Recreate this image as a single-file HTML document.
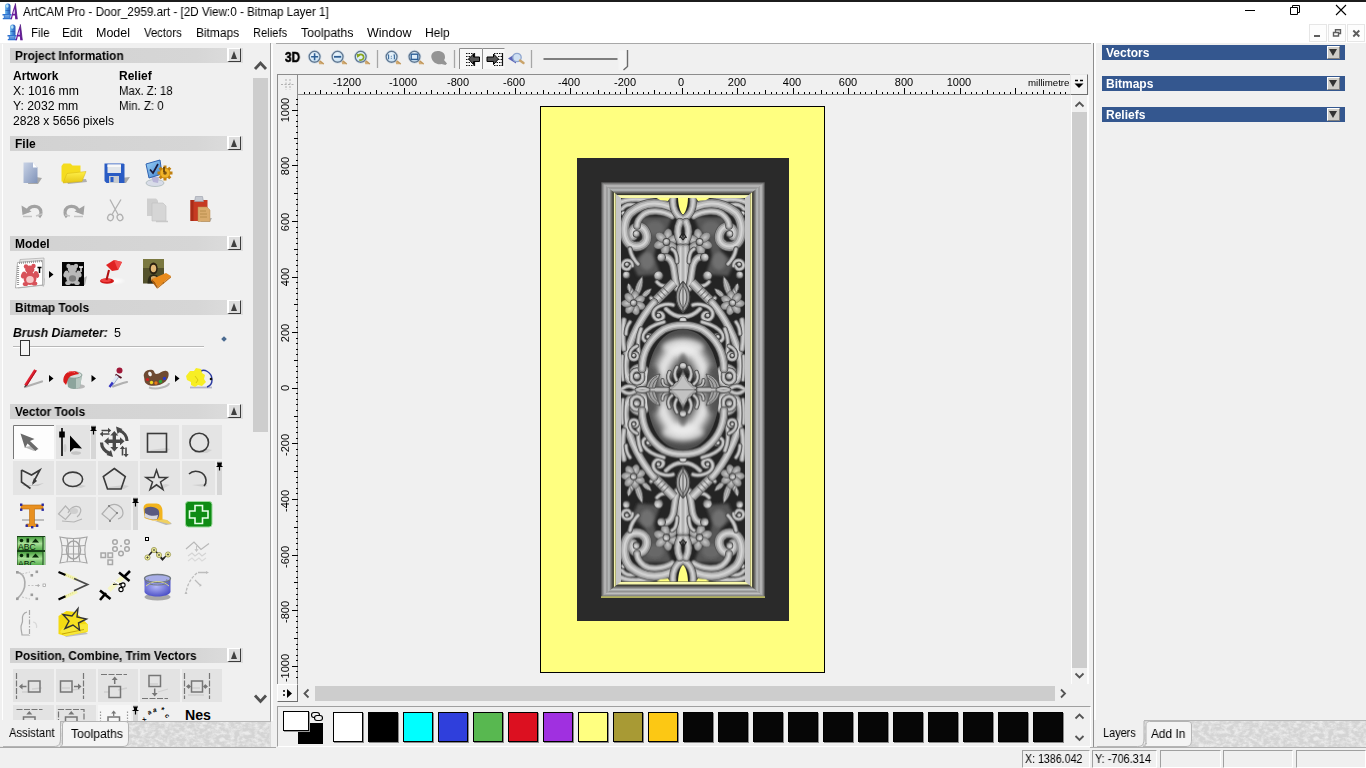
<!DOCTYPE html>
<html><head><meta charset="utf-8"><title>ArtCAM Pro</title>
<style>
*{box-sizing:border-box;margin:0;padding:0}
html,body{width:1366px;height:768px;overflow:hidden;background:#f0f0f0;font-family:"Liberation Sans",sans-serif;font-size:12px;color:#000}
.a{position:absolute}
.t{position:absolute;white-space:nowrap;line-height:1;transform-origin:0 0;will-change:transform}
.hdr{position:absolute;left:10px;width:233px;height:15px;background:linear-gradient(90deg,#d2d2d2 0%,#d6d6d6 80%,#dedede 100%)}
.hdr b{will-change:transform;position:absolute;left:5px;top:2px;font-size:12px;line-height:13px;white-space:nowrap;transform-origin:0 0;transform:scaleX(.987)}
.hbtn{position:absolute;right:2px;top:0;width:14px;height:14px;background:#dedede;border:1px solid;border-color:#fff #3c3c3c #3c3c3c #fff;border-left-width:2px;border-top-width:1px}
.hbtn:after{content:"";position:absolute;left:2px;top:2px;border:3.5px solid transparent;border-top:0;border-bottom:8px solid #404040}
.bh{position:absolute;left:1102px;width:243px;height:15px;background:#34578f}
.bh b{will-change:transform;position:absolute;left:4px;top:2px;font-size:12px;line-height:13px;color:#fff;white-space:nowrap}
.bbtn{position:absolute;left:225px;top:1px;width:13px;height:13px;background:#cfcdc8;border:1px solid;border-color:#fff #808080 #808080 #fff}
.bbtn:after{content:"";position:absolute;left:1px;top:2px;border:4.5px solid transparent;border-bottom:0;border-top:7px solid #333}
.sw{position:absolute;top:712px;width:30px;height:30px;border:1px solid #000;box-shadow:1px 1px 0 #8a8a8a}
.ic{position:absolute;width:40px;height:34px}
.tb{position:absolute;background:#e2e2e2}
</style></head><body>
<!-- top strip -->
<div class="a" style="left:0;top:0;width:1366px;height:2px;background:#1c1c1c"></div>
<div class="a" style="left:0;top:2px;width:1366px;height:41px;background:#fff"></div>
<!-- app icons -->
<svg class="a" style="left:2px;top:3px" width="16" height="17" viewBox="0 0 16 17"><defs><linearGradient id="lgm" x1="0" y1="0" x2="1" y2="0"><stop offset="0" stop-color="#7ec4f0"/><stop offset=".5" stop-color="#3c84d8"/><stop offset="1" stop-color="#2858b0"/></linearGradient><g id="applogo"><rect x="3" y=".5" width="5.500" height="12" rx="2.500" fill="url(#lgm)"/><ellipse cx="5.300" cy="3" rx="1.300" ry="1.800" fill="#c4ecfa" opacity=".9"/><rect x="3.500" y="7" width="4.500" height="1" fill="#2050a8" opacity=".6"/><path d="M.5 11h9v1.500h-1v2.500h1v1.200H.8v-1.200h1v-2.500H.5z" fill="#2f72d0"/><path d="M2.500 12.700h5M2.500 14h5" stroke="#9ccaf0" stroke-width=".7"/><path d="M8.500 16.200C10 11 11.500 5 13.300 0.300 14 5 14.600 11 15.300 16.200H13.200L12.900 12.500H10.800L9.900 16.200Z" fill="#6a1c9c"/><path d="M11.200 10.800h1.600L12.500 5.500Z" fill="#fff"/><path d="M13.300 .3C14 5 14.600 11 15.300 16.200" stroke="#4a1078" stroke-width=".8" fill="none"/></g></defs><use href="#applogo"/></svg>
<svg class="a" style="left:7px;top:24px" width="16" height="17" viewBox="0 0 16 17"><use href="#applogo"/></svg>
<!-- title -->
<div class="t" id="title" style="left:23px;top:6px;font-size:12px;transform:scaleX(.972)">ArtCAM Pro - Door_2959.art - [2D View:0 - Bitmap Layer 1]</div>
<!-- window controls -->
<svg class="a" style="left:1240px;top:2px" width="126" height="20" viewBox="1240 2 126 20">
<path d="M1245 10.500h10" stroke="#000" stroke-width="1" fill="none"/>
<path d="M1290.500 7.500h7v7h-7z M1292.500 7.500v-2h7v7h-2" stroke="#000" stroke-width="1" fill="none"/>
<path d="M1336 5l10 10M1346 5l-10 10" stroke="#000" stroke-width="1.100" fill="none"/>
</svg>
<!-- menu -->
<div class="t m" style="left:31px;top:27px;font-size:12.5px;transform:scaleX(0.92)">File</div>
<div class="t m" style="left:62px;top:27px;font-size:12.5px;transform:scaleX(0.95)">Edit</div>
<div class="t m" style="left:96px;top:27px;font-size:12.5px;transform:scaleX(1)">Model</div>
<div class="t m" style="left:144px;top:27px;font-size:12.5px;transform:scaleX(0.905)">Vectors</div>
<div class="t m" style="left:196px;top:27px;font-size:12.5px;transform:scaleX(0.955)">Bitmaps</div>
<div class="t m" style="left:253px;top:27px;font-size:12.5px;transform:scaleX(0.893)">Reliefs</div>
<div class="t m" style="left:301px;top:27px;font-size:12.5px;transform:scaleX(0.98)">Toolpaths</div>
<div class="t m" style="left:367px;top:27px;font-size:12.5px;transform:scaleX(0.99)">Window</div>
<div class="t m" style="left:425px;top:27px;font-size:12.5px;transform:scaleX(0.96)">Help</div>
<!-- mdi controls -->
<svg class="a" style="left:1308px;top:23px" width="58" height="20" viewBox="1308 23 58 20">
<g fill="#fdfdfd" stroke="#e6e6e6" stroke-width="1"><rect x="1309.500" y="24.500" width="17" height="17"/><rect x="1328.500" y="24.500" width="17" height="17"/><rect x="1347.500" y="24.500" width="17" height="17"/></g>
<path d="M1314 36h6" stroke="#5e5e5e" stroke-width="2"/>
<path d="M1333.500 32.500h5v3.500h-5z M1335.500 32v-2.300h5v3.800h-1.800" stroke="#5e5e5e" stroke-width="1.400" fill="none"/>
<path d="M1353.300 30.500l6 6M1359.300 30.500l-6 6" stroke="#5e5e5e" stroke-width="1.900" fill="none"/>
</svg>
<!-- status bar -->
<div class="a" style="left:1022px;top:750px;width:68px;height:18px;border:1px solid;border-color:#a0a0a0 #fff #fff #a0a0a0"></div>
<div class="a" style="left:1092px;top:750px;width:65px;height:18px;border:1px solid;border-color:#a0a0a0 #fff #fff #a0a0a0"></div>
<div class="a" style="left:1160px;top:750px;width:61px;height:18px;border:1px solid;border-color:#a0a0a0 #fff #fff #a0a0a0"></div>
<div class="a" style="left:1223px;top:750px;width:70px;height:18px;border:1px solid;border-color:#a0a0a0 #fff #fff #a0a0a0"></div>
<div class="a" style="left:1296px;top:750px;width:70px;height:18px;border:1px solid;border-color:#a0a0a0 #fff #fff #a0a0a0"></div>
<div class="t" style="left:1025px;top:753px;font-size:12px;transform:scaleX(.886)">X: 1386.042</div>
<div class="t" style="left:1095px;top:753px;font-size:12px;transform:scaleX(.912)">Y: -706.314</div>
<!-- LEFT PANEL -->
<div class="a" style="left:0;top:43px;width:271px;height:679px;border-right:1px solid #a0a0a0;border-bottom:1px solid #b4b4b4"></div><div class="a" style="left:0;top:747px;width:276px;height:1px;background:#a8a8a8"></div>
<div class="a" style="left:2px;top:44px;width:1px;height:677px;background:#fff"></div>
<!-- scrollbar -->
<div class="a" style="left:252px;top:47px;width:17px;height:674px;background:#f0f0f0"></div>
<div class="a" style="left:253px;top:78px;width:15px;height:354px;background:#cdcdcd"></div>
<svg class="a" style="left:252px;top:57px" width="17" height="16"><path d="M3 12L8.500 6 14 12" stroke="#505050" stroke-width="2.800" fill="none"/></svg>
<svg class="a" style="left:252px;top:692px" width="17" height="16"><path d="M3 3.500L8.500 9.500 14 3.500" stroke="#505050" stroke-width="2.800" fill="none"/></svg>

<div class="hdr" style="top:48px"><b>Project Information</b><i class="hbtn"></i></div>
<div class="t" style="left:13px;top:70px;font-weight:bold;font-size:12px">Artwork</div>
<div class="t" style="left:119px;top:70px;font-weight:bold;font-size:12px">Relief</div>
<div class="t" style="left:13px;top:84.500px;font-size:12px;transform:scaleX(1.02)">X: 1016 mm</div>
<div class="t" style="left:119px;top:84.500px;font-size:12px;transform:scaleX(.947)">Max. Z: 18</div>
<div class="t" style="left:13px;top:99.500px;font-size:12px;transform:scaleX(1.02)">Y: 2032 mm</div>
<div class="t" style="left:119px;top:99.500px;font-size:12px;transform:scaleX(.957)">Min. Z: 0</div>
<div class="t" style="left:13px;top:114.500px;font-size:12px;transform:scaleX(1.01)">2828 x 5656 pixels</div>

<div class="hdr" style="top:136px"><b>File</b><i class="hbtn"></i></div>
<svg class="a" style="left:0;top:152px" width="250" height="84" viewBox="0 152 250 84">
<defs>
<linearGradient id="gpage" x1="0" y1="0" x2="1" y2="1"><stop offset="0" stop-color="#c9d3e6"/><stop offset="1" stop-color="#7f92b8"/></linearGradient>
<linearGradient id="gfold" x1="0" y1="0" x2="0" y2="1"><stop offset="0" stop-color="#fff04a"/><stop offset="1" stop-color="#e6c614"/></linearGradient>
<linearGradient id="gmon" x1="0" y1="0" x2="1" y2="1"><stop offset="0" stop-color="#9fd4f6"/><stop offset="1" stop-color="#3d7fd0"/></linearGradient>
<filter id="b1" x="-30%" y="-30%" width="160%" height="160%"><feGaussianBlur stdDeviation=".6"/></filter>
<filter id="b2" x="-30%" y="-30%" width="160%" height="160%"><feGaussianBlur stdDeviation="1"/></filter>
</defs>
<!-- new -->
<path d="M30 176l12 2-4 6H28z" fill="#a8a8a8" filter="url(#b1)"/>
<path d="M23.500 162.500H33l4.500 5V183H23.500z" fill="url(#gpage)"/>
<path d="M33 162.500v5h4.500z" fill="#fff"/>
<!-- open -->
<path d="M66 180l20-1 1 3-19 2z" fill="#b0b0b0" filter="url(#b1)"/>
<path d="M61.500 166l2-2.500h7l2 2h8v8l-15 9-4-1z" fill="#f5dc1e"/>
<path d="M63 183l4-9.500 19-2-4 10z" fill="url(#gfold)" stroke="#d4b410" stroke-width=".5"/>
<!-- save -->
<path d="M120 178l10-1-4 6h-8z" fill="#a8a8a8" filter="url(#b1)"/>
<path d="M104.500 163.500h19l1 1V183h-18l-2-2z" fill="#2a5cc4"/>
<rect x="107.500" y="164.500" width="13.500" height="8.500" fill="#e2e6ea"/>
<rect x="107.500" y="164.500" width="13.500" height="2.500" fill="#f8f8f8"/>
<rect x="109" y="176" width="10" height="7" fill="#c8ccd0"/>
<rect x="110.500" y="177" width="3" height="5" fill="#2a5cc4"/>
<!-- options -->
<ellipse cx="155" cy="183" rx="9" ry="3.500" fill="#d8dce8" stroke="#9aa" stroke-width=".6"/>
<path d="M151 176l8 1-1 6-5-1z" fill="#b8b4d8"/>
<path d="M146 164l14-4 2 14-13 4z" fill="url(#gmon)" stroke="#2f62b0" stroke-width="1"/>
<path d="M150 169.500l3 3.500 5-9" stroke="#1a1a3a" stroke-width="1.700" fill="none"/>
<g transform="translate(165,173)"><circle r="5.500" fill="#e0a21c"/><g stroke="#c08010" stroke-width="3"><path d="M0-7.500v15M-7.500 0h15M-5.300-5.300l10.600 10.600M-5.300 5.300l10.600-10.600"/></g><circle r="4.600" fill="#f0b428"/><circle r="1.800" fill="#7a5410"/><path d="M-1-6v5" stroke="#5a3a08" stroke-width="1.600"/></g>
<!-- undo -->
<g fill="none" stroke="#a2a2a2" stroke-width="3.200"><path d="M27 212c2-7 13-8 14 0 .3 2-.5 3.500-2 5"/></g>
<path d="M21.500 205.500l1 9.500 9-3.500z" fill="#a2a2a2"/>
<path d="M23 216.500h9M36 216l6-2" stroke="#c4c4c4" stroke-width="1.400"/>
<!-- redo -->
<g fill="none" stroke="#a2a2a2" stroke-width="3.200"><path d="M79 212c-2-7-13-8-14 0-.3 2 .5 3.500 2 5"/></g>
<path d="M84.500 205.500l-1 9.500-9-3.500z" fill="#a2a2a2"/>
<path d="M74 216.500h9M70 216l-5-1" stroke="#c4c4c4" stroke-width="1.400"/>
<!-- cut -->
<g fill="none" stroke="#b2b2b2" stroke-width="1.300"><path d="M110 199.500l8 15M121 199.500l-9 15"/><ellipse cx="110.500" cy="217.500" rx="2.800" ry="3.200" transform="rotate(25 110.500 217.500)"/><ellipse cx="120" cy="217.500" rx="2.800" ry="3.200" transform="rotate(-25 120 217.500)"/></g>
<!-- copy -->
<path d="M147 198.500h9l2 2V216h-11z" fill="#cfcfcf"/>
<path d="M152 203h11l3 3v15h-14z" fill="#d6d6d6" stroke="#c0c0c0" stroke-width=".6"/>
<path d="M156 221.500h12" stroke="#c8c8c8" stroke-width="1.500"/>
<!-- paste -->
<path d="M200 219l12-1-2 4h-9z" fill="#b0b0b0" filter="url(#b1)"/>
<path d="M190.500 200h17v21h-17z" fill="#c63a22"/>
<path d="M190.500 200h3v21h-3z" fill="#a82c18"/>
<path d="M195.500 196.500h7l1 5h-9z" fill="#c4c8d0" stroke="#989ca8" stroke-width=".6"/>
<path d="M198 207h9l3 3v11.500h-12z" fill="#d9ab6c" stroke="#b88c50" stroke-width=".5"/>
<path d="M200 211h6M200 214h7M200 217h7" stroke="#b08848" stroke-width=".8"/>
</svg>

<div class="hdr" style="top:236px"><b>Model</b><i class="hbtn"></i></div>
<svg class="a" style="left:0;top:252px" width="250" height="46" viewBox="0 252 250 46">
<defs><radialGradient id="glow" cx=".5" cy=".5" r=".5"><stop offset="0" stop-color="#fff"/><stop offset="1" stop-color="#fff" stop-opacity="0"/></radialGradient></defs>
<!-- teddy on paper -->
<path d="M38 284l7-6-1 9z" fill="#c8c8c8"/>
<path d="M20 259.500l24-1.500v27l-26 3z" fill="#e6e6e6" stroke="#aaa" stroke-width=".7"/>
<path d="M17.500 262.500l25-2V285l-27 3z" fill="#fff" stroke="#999" stroke-width=".7"/>
<path d="M19 263l23-2M18 266v20" stroke="#999" stroke-width="2.200" stroke-dasharray="1 1"/>
<g fill="#d8525a"><circle cx="26" cy="266.500" r="2.200"/><circle cx="33.500" cy="266" r="2.200"/><ellipse cx="29.800" cy="269.500" rx="4.600" ry="4"/><ellipse cx="30" cy="278.500" rx="6.500" ry="6.500"/><ellipse cx="23.500" cy="275" rx="2.300" ry="3.500" transform="rotate(25 23.500 275)"/><ellipse cx="36.500" cy="274.500" rx="2.300" ry="3.500" transform="rotate(-25 36.500 274.500)"/><ellipse cx="25.500" cy="284" rx="2.800" ry="2"/><ellipse cx="34.500" cy="283.500" rx="2.800" ry="2"/></g>
<ellipse cx="30" cy="279.500" rx="3.800" ry="3.500" fill="#f6c8c8"/>
<path d="M37.500 267.500h4M39.500 267.500v5.500" stroke="#000" stroke-width="1.500"/>
<path d="M49 271l4.500 3.500-4.500 3.500z" fill="#000"/>
<!-- bear black -->
<path d="M80 280l7-4-2 9h-5z" fill="#b4b4b4" filter="url(#b1)"/>
<rect x="62" y="262" width="22" height="24" fill="#050505"/>
<g fill="#b9b9b9"><circle cx="68.500" cy="266" r="2.200"/><circle cx="76" cy="266" r="2.200"/><ellipse cx="72.300" cy="269" rx="4.600" ry="4"/><ellipse cx="72.500" cy="277.500" rx="6.500" ry="6.200"/><ellipse cx="66" cy="274" rx="2.300" ry="3.500" transform="rotate(25 66 274)"/><ellipse cx="79" cy="274" rx="2.300" ry="3.500" transform="rotate(-25 79 274)"/><ellipse cx="68" cy="283" rx="2.800" ry="2"/><ellipse cx="77" cy="283" rx="2.800" ry="2"/></g>
<ellipse cx="72.500" cy="278.500" rx="3.600" ry="3.300" fill="#7e7e7e"/>
<path d="M79 267h4M81 267v5" stroke="#fff" stroke-width="1.300"/>
<!-- lamp -->
<ellipse cx="116" cy="281" rx="10" ry="4" fill="url(#glow)"/>
<ellipse cx="107" cy="281" rx="7" ry="2.800" fill="#d01818"/>
<ellipse cx="106" cy="280.300" rx="5" ry="1.800" fill="#f04040"/>
<path d="M106.500 280l2.500-10" stroke="#b01010" stroke-width="2"/>
<path d="M106 265l8-5 8 2-4 8-6 1z" fill="#e02222"/>
<path d="M114 260l8 2-4 8z" fill="#f25050"/>
<!-- mona lisa -->
<rect x="143" y="259" width="21" height="24.500" fill="#54522c"/>
<path d="M143 259h21v9h-21z" fill="#7a7840"/>
<path d="M147.500 283.500c0-6 2-9 6-9s6.500 3 6.500 9z" fill="#2c2a18"/>
<ellipse cx="153.500" cy="268.500" rx="4.200" ry="6" fill="#2a2010"/>
<ellipse cx="153.500" cy="268.500" rx="2.700" ry="3.800" fill="#e2b878"/>
<path d="M151 277c1.500-1.500 4-1.500 5.500 0v4h-5.500z" fill="#d6a868"/>
<path d="M152 279l14-6 5 3-13 11z" fill="#e88a1c"/>
<path d="M152 279l6 8-1 1.500-6-8z" fill="#a85a0c"/>
<path d="M158 287l13-11v1.500l-14 11.500z" fill="#c06c10"/>
</svg>

<div class="hdr" style="top:300px"><b>Bitmap Tools</b><i class="hbtn"></i></div>
<div class="t" style="left:13px;top:327px;font-size:12.500px;font-weight:bold;font-style:italic;transform:scaleX(.975)">Brush Diameter:</div>
<div class="t" style="left:114px;top:327px;font-size:12.500px">5</div>
<div class="a" style="left:13px;top:346px;width:191px;height:2px;background:#b8b8b8;border-bottom:1px solid #fff"></div>
<div class="a" style="left:20px;top:340px;width:10px;height:16px;background:#f4f4f4;border:1px solid #333"></div>
<div class="a" style="left:222px;top:337px;width:4px;height:4px;background:#4a6a90;transform:rotate(45deg)"></div>
<svg class="a" style="left:0;top:360px" width="250" height="40" viewBox="0 360 250 40">
<!-- pencil -->
<path d="M25 387l17-5.500" stroke="#b0b0b0" stroke-width="2.200" stroke-linecap="round"/>
<path d="M35.500 370L25.500 385.500" stroke="#e02030" stroke-width="3"/>
<path d="M36.300 370.500L26.400 386" stroke="#a01020" stroke-width=".9"/>
<path d="M24.300 387.600l.8-2.600 1.700 1.100z" fill="#333"/>
<path d="M49 375l4.500 3.500-4.500 3.500z" fill="#000"/>
<!-- bucket -->
<ellipse cx="77" cy="386.500" rx="8" ry="2.500" fill="#b8b8b8"/>
<path d="M66 375l2 12c3 2.500 9 2.500 12 0l2-12z" fill="#8ca49c"/>
<path d="M76 376l6-1-2 12c-1.200 1-2.600 1.600-4 1.800z" fill="#b6c6c0"/>
<ellipse cx="74" cy="375" rx="8" ry="3.200" fill="#d6dedb" stroke="#7c948c" stroke-width=".8"/>
<path d="M63.500 382c-1-6 3-11 9-11 4 0 6 1.500 6.500 3-4 .5-8 1.500-9.500 3-2 2-2.500 6-3.500 8z" fill="#d81c1c"/>
<path d="M68 372.500c2-1.200 5-1.200 7 0" stroke="#f87070" stroke-width="1" fill="none"/>
<path d="M91.500 375l4.500 3.500-4.500 3.500z" fill="#000"/>
<!-- dropper -->
<path d="M113 386.500l10-3.500 4-1" stroke="#b0b0b0" stroke-width="2.200" stroke-linecap="round"/>
<circle cx="119.500" cy="370.500" r="3" fill="#a01838"/>
<path d="M115.500 374.500l6 3.500" stroke="#501020" stroke-width="2"/>
<path d="M117.500 376L111 385" stroke="#dde6f4" stroke-width="3"/>
<path d="M117.500 376L111 385" stroke="#8090b0" stroke-width=".7" transform="translate(1.400,.8)"/>
<path d="M112.800 382.500L109.500 387" stroke="#3434c0" stroke-width="2.400"/>
<!-- palette -->
<path d="M149 387.500c8 2.500 20-1 20-4.500" stroke="#b8b8b8" stroke-width="2" fill="none"/>
<path d="M144 377c-1.500-5 4-8.500 8.500-7 2.500 1 1.500 4 4 4 3.500 0 6-4 10-3 3.500 1 2.500 7-1 10.500-5 5-16 6-20 1.500-1.200-1.500-1-4-1.500-6z" fill="#6e4a32"/>
<ellipse cx="150" cy="374" rx="1.800" ry="2.300" fill="#f0f0f0" transform="rotate(-20 150 374)"/>
<circle cx="147.500" cy="379.500" r="1.600" fill="#d02020"/>
<circle cx="151.500" cy="382.500" r="1.700" fill="#f0d820"/>
<circle cx="156" cy="383" r="1.700" fill="#e87818"/>
<circle cx="160.500" cy="381.500" r="1.700" fill="#28a838"/>
<circle cx="164.500" cy="378.500" r="1.700" fill="#2838c8"/>
<path d="M175 375l4.500 3.500-4.500 3.500z" fill="#000"/>
<!-- yellow blob -->
<path d="M190 387.500h22" stroke="#b4b4c8" stroke-width="1.800"/>
<path d="M199 372c5-4 13 0 13 8 0 4-2 6-5 7" stroke="#2a3aa0" stroke-width="1.400" fill="none"/>
<circle cx="200" cy="371.500" r="1.300" fill="#111"/><circle cx="211" cy="379" r="1.300" fill="#111"/>
<path d="M186 376l4-5 4 0 2-3 5 1 1 4 3 2-1 4 2 3-4 4-4-1-3 2-4-2v-3l-4-2z" fill="#f7ee24"/>
<path d="M195 376l3 4-2 3" stroke="#d8c810" stroke-width="1" fill="none"/>
</svg>

<div class="hdr" style="top:404px"><b>Vector Tools</b><i class="hbtn"></i></div>
<svg class="a" style="left:0;top:420px" width="250" height="226" viewBox="0 420 250 226">
<defs>
<g id="pin"><path d="M-2.500 0h5M-1.500 0v3.500M1.500 0v3.500M-3 3.500h6M0 3.500v4" stroke="#000" stroke-width="1.200" fill="none"/><rect x="-1.500" y="0" width="3" height="3.500" fill="#000"/></g>
<linearGradient id="gabc" x1="0" y1="0" x2="0" y2="1"><stop offset="0" stop-color="#4aa040"/><stop offset=".5" stop-color="#a8e098"/><stop offset="1" stop-color="#58b050"/></linearGradient>
<radialGradient id="gdome" cx=".45" cy=".4" r=".6"><stop offset="0" stop-color="#b4b8f8"/><stop offset="1" stop-color="#5054c8"/></radialGradient>
</defs>
<!-- row1 backgrounds -->
<rect x="13" y="425" width="41" height="34" fill="#fdfdfd"/><path d="M13.500 459V425.500H54" stroke="#777" fill="none"/>
<rect x="56" y="425" width="34" height="34" fill="#e3e3e3"/><rect x="91" y="425" width="5" height="34" fill="#d6d6d6"/>
<rect x="140" y="425" width="39" height="34" fill="#e4e4e4"/><rect x="182" y="425" width="40" height="34" fill="#e4e4e4"/>
<!-- select arrow -->
<path d="M24 447l10 4 5-2-8-3z" fill="#b8b8b8"/>
<path d="M20.500 433.500l14 5.500-4.500 2 8 7.500-2.500 2.500-8-7.500-2.500 4.500z" fill="#6a6a6a"/>
<!-- node edit -->
<path d="M62 428v28" stroke="#000" stroke-width="1.600"/><rect x="59.200" y="431.500" width="5.600" height="6" fill="#000"/>
<ellipse cx="76" cy="453" rx="5" ry="1.800" fill="#c4c4c4"/><ellipse cx="65" cy="448" rx="1.500" ry="4" fill="#cfcfcf"/>
<path d="M70 435.500v16.500l4-4 8 .5z" fill="#000"/>
<use href="#pin" x="93.500" y="427"/>
<!-- transform -->
<g fill="#484848" stroke="none">
<path d="M114.300 431l4 4.500h-2.300v4h4v-2.300l4.500 4-4.500 4v-2.300h-4v4h2.300l-4 4.500-4-4.500h2.300v-4h-4v2.300l-4.500-4 4.500-4v2.300h4v-4h-2.300z"/>
</g>
<g fill="none" stroke="#484848" stroke-width="3.200"><path d="M119 430.500c5 1.500 8 6 8 10.500"/><path d="M110 453.500c-5-1.500-8.500-6-8.500-11"/></g>
<path d="M116 426.500l6.500 2.500-5 5z" fill="#484848"/><path d="M113 457l-6.500-2 4.500-5z" fill="#484848"/>
<g stroke="#484848" stroke-width="1.600" fill="#484848"><path d="M101.500 430.500h7M102.500 434h7" fill="none"/><path d="M108 427.800l3.200 2.700-3.200 2.700zM103 431.300l-3.200 2.700 3.200 2.700z" stroke="none"/><path d="M122.500 448.500v7M126 447.500v7" fill="none"/><path d="M119.800 449l2.700-3.200 2.700 3.200zM123.300 454l2.700 3.200 2.700-3.200z" stroke="none"/></g>
<!-- rect -->
<path d="M150 450l16-2 4 1-3 3h-16z" fill="#d0d0d0"/>
<rect x="147.500" y="433.500" width="19" height="18.500" fill="none" stroke="#3a3a3a" stroke-width="1.600"/>
<!-- circle -->
<path d="M194 451l14-2 4 1-5 3h-12z" fill="#d0d0d0"/>
<circle cx="199.200" cy="442.500" r="9.300" fill="none" stroke="#3a3a3a" stroke-width="1.600"/>
<!-- row2 backgrounds -->
<rect x="13" y="461" width="41" height="34" fill="#e4e4e4"/><rect x="56" y="461" width="40" height="34" fill="#e4e4e4"/><rect x="98" y="461" width="40" height="34" fill="#e4e4e4"/><rect x="140" y="461" width="40" height="34" fill="#e4e4e4"/><rect x="182" y="461" width="33" height="34" fill="#e4e4e4"/><rect x="217" y="461" width="5" height="34" fill="#d6d6d6"/>
<!-- polyline -->
<path d="M22 485l12 0 10-2-6 3h-14z" fill="#c8c8c8"/>
<path d="M21.500 470v12l9 6.500M21.500 470l10 5 8.500-5-7 13" fill="none" stroke="#3a3a3a" stroke-width="1.600"/>
<path d="M32 485l2-7 3 3z" fill="#3a3a3a"/>
<!-- ellipse -->
<path d="M68 487l14-2 4 1-5 2z" fill="#cfcfcf"/>
<ellipse cx="72.800" cy="479.300" rx="9.800" ry="7.200" fill="none" stroke="#3a3a3a" stroke-width="1.600"/>
<!-- pentagon -->
<path d="M108 487l16-2 5 1-5 3h-14z" fill="#d0d0d0"/>
<path d="M114.300 468.500l11 8-4.200 12.500h-13.600l-4.200-12.500z" fill="none" stroke="#3a3a3a" stroke-width="1.600"/>
<!-- star -->
<path d="M150 487l16-3 4 1-6 3z" fill="#d4d4d4"/>
<path d="M156.500 470l2.500 7.500h8l-6.500 4.500 2.500 7.500-6.500-4.700-6.500 4.700 2.500-7.500-6.500-4.500h8z" fill="none" stroke="#3a3a3a" stroke-width="1.500"/>
<!-- arc -->
<path d="M192 485l12-1 4 2-4 1z" fill="#cfcfcf"/>
<path d="M189 474c5-5 16-3 17 6 .3 3-1 5-2 6" fill="none" stroke="#3a3a3a" stroke-width="1.600"/>
<use href="#pin" x="219.500" y="463"/>
<!-- row3 -->
<rect x="56" y="497" width="40" height="33" fill="#e5e5e5"/><rect x="98" y="497" width="33" height="33" fill="#e5e5e5"/><rect x="133" y="497" width="5" height="33" fill="#d6d6d6"/>
<!-- text T -->
<path d="M22 520h22" stroke="#bdbdbd" stroke-width="2"/>
<path d="M21 505h22v4h-8.500v15h3v2.500h-11v-2.500h3v-15H21z" fill="#e89020" stroke="#b86808" stroke-width=".6"/>
<g fill="#2828a0"><rect x="20" y="503.500" width="2.400" height="2.400"/><rect x="41.500" y="503.500" width="2.400" height="2.400"/><rect x="20" y="508.500" width="2.400" height="2.400"/><rect x="41.500" y="508.500" width="2.400" height="2.400"/><rect x="25.500" y="524.500" width="2.400" height="2.400"/><rect x="36" y="524.500" width="2.400" height="2.400"/><rect x="31" y="526" width="2.400" height="2.400"/></g>
<!-- faded icons -->
<g fill="none" stroke="#b4b4b4" stroke-width="1.200"><path d="M58.500 514l7-8 6 6.500-6 7z"/><path d="M68 513c2-5 7-8 11-6 3 2 2 7-2 10"/><path d="M62 521l12 1 8-3"/></g>
<ellipse cx="74" cy="511" rx="4" ry="3" fill="#cfcfcf"/>
<g fill="none" stroke="#b0b0b0" stroke-width="1.200"><path d="M102 514l7-8 8 7-7 7.500z"/><path d="M109 506c6-4 14 0 14 7 0 3-2 5-5 6"/></g>
<circle cx="109" cy="506" r="1" fill="#777"/><circle cx="117" cy="513" r="1" fill="#777"/><circle cx="110" cy="521" r="1" fill="#777"/>
<use href="#pin" x="135.500" y="499"/>
<!-- tape measure -->
<path d="M155 521l12-1 5 4-6 1z" fill="#b8b8b8"/>
<path d="M158 518l9 2 4 3-2 1-12-3z" fill="#f0d060"/>
<path d="M143.500 508c0-3 2-4.500 5-4.500h8c4 0 6 4 6 8v8c-6 2-13 1-18-1.500z" fill="#f2b41e"/>
<path d="M144.500 509c3-3 10-3 14 1 1.500 4 .5 7-1 9-4 1-9 0-12.500-2z" fill="#5a5a80"/>
<path d="M145 513c4 3 9 3.500 13 2l-1 4c-4 1-9 0-12.500-2z" fill="#d8d8e0"/>
<!-- green cross -->
<rect x="185.500" y="501.500" width="26.500" height="25.500" rx="3" fill="#0e8c14" stroke="#9ad89a" stroke-width="1"/>
<path d="M195 505.500h7.500v5.500h5.500v7h-5.500v5.500H195v-5.500h-5.500v-7h5.500z" fill="none" stroke="#e8ffe8" stroke-width="1.600"/>
<!-- row4 ABC -->
<svg x="17" y="536" width="28.500" height="29" viewBox="17 536 28.500 29"><g><rect x="17" y="536" width="28.500" height="29" fill="#164016"/>
<rect x="17.500" y="537" width="25" height="13" fill="url(#gabc)"/><rect x="17.500" y="552" width="25" height="13" fill="url(#gabc)"/><rect x="43.500" y="537" width="2" height="13" fill="#90d088"/><rect x="43.500" y="552" width="2" height="13" fill="#90d088"/>
<circle cx="21.500" cy="540.500" r="1.800" fill="#082808"/><rect x="26.500" y="538.500" width="2.600" height="4" fill="#082808"/><path d="M32 542.500l3.500-4 3.500 4z" fill="#082808"/>
<circle cx="21.500" cy="555.500" r="1.800" fill="#082808"/><rect x="26.500" y="553.500" width="2.600" height="4" fill="#082808"/><path d="M32 557.500l3.500-4 3.500 4z" fill="#082808"/>
<text x="18" y="549.700" font-family="Liberation Sans,sans-serif" font-size="8.600" fill="#0a240a">ABC</text>
<text x="18" y="566.700" font-family="Liberation Sans,sans-serif" font-size="8.600" fill="#0a240a">ABC</text></g></svg>
<!-- distort grid -->
<g fill="none" stroke="#a4a4a4" stroke-width="1.100"><path d="M60 537c9 2 18 2 27 0-3 9-3 17 0 26-9-2-18-2-27 0 3-9 3-17 0-26z"/><path d="M62 545.500c8 1 15 1 23 0M62 554.500c8-1 15-1 23 0M67 538.500c2 8 2 15 0 23.500M73.500 539v23M80 538.500c-2 8-2 15 0 23.500"/><ellipse cx="73.500" cy="550" rx="7" ry="9" stroke-width="1.600"/></g>
<!-- squares dots -->
<g fill="none" stroke="#a8a8a8" stroke-width="1.500"><rect x="101" y="553" width="4.500" height="4.500"/><rect x="108" y="553" width="4.500" height="4.500"/><rect x="108" y="560" width="4.500" height="4.500"/><circle cx="115" cy="542" r="2.300"/><circle cx="127" cy="542" r="2.300"/><circle cx="115" cy="549" r="2.300"/><circle cx="127" cy="549" r="2.300"/><circle cx="121" cy="553.500" r="2.300"/></g><circle cx="121" cy="546" r=".9" fill="#a8a8a8"/>
<!-- nodes polyline -->
<rect x="145.500" y="537.500" width="3" height="3" fill="#fff" stroke="#000" stroke-width="1"/>
<path d="M147 557.500l7-8 5 5.500 3.500 4 5.500-4.500" fill="none" stroke="#222" stroke-width="1.600"/>
<g fill="#f6f4a0" stroke="#8a8840" stroke-width=".7"><circle cx="147.500" cy="557.500" r="2.600"/><circle cx="154" cy="550" r="2.600"/><circle cx="159" cy="555" r="2.600"/><circle cx="168" cy="554.500" r="2.600"/></g>
<path d="M160 558l2.500 3 2.500-3z" fill="#222"/>
<g stroke="#333" stroke-width=".7"><path d="M146.300 557.500h2.400M147.500 556.300v2.400M152.800 550h2.400M154 548.800v2.400M157.800 555h2.400M159 553.800v2.400M166.800 554.500h2.400M168 553.300v2.400"/></g>
<!-- faded zigzag -->
<g fill="none" stroke="#b8b8b8" stroke-width="1.200"><path d="M186 549l8-7 7 7.500 8-6"/><path d="M188 556l4-3 3 3 4-3 3 3 4-3" stroke="#d4d4d4"/><path d="M188 561l4-3 3 3 4-3 3 3 4-3" stroke="#dadada"/></g>
<path d="M196.500 546v5M195 549l1.500 2.500 1.500-2.500" stroke="#c4c4c4" stroke-width="1" fill="none"/>
<!-- row5: bezier grey -->
<g fill="none" stroke="#adadad" stroke-width="1.700"><path d="M17 572c9 2 12 16 0 27"/></g>
<path d="M22 574l8-2M22 597l8 2M28 585.500h12" stroke="#c4c4c4" stroke-width="1" stroke-dasharray="2 1.500" fill="none"/>
<g fill="#9c9c9c"><rect x="16" y="571" width="2.600" height="2.600"/><rect x="16" y="597.500" width="2.600" height="2.600"/><rect x="30.500" y="574" width="2.600" height="2.600"/><rect x="30.500" y="593.500" width="2.600" height="2.600"/><rect x="35.500" y="570.500" width="2.600" height="2.600"/><rect x="35.500" y="597.500" width="2.600" height="2.600"/></g>
<rect x="43" y="584" width="2.400" height="2.400" fill="#fff" stroke="#999" stroke-width=".7"/>
<path d="M36 585.500l3-1.500v3z" fill="#b0b0b0"/>
<!-- > with yellow -->
<path d="M64 574l13 5.500M64 597.500l13-6" stroke="#f4f4b0" stroke-width="3.500"/>
<path d="M58.500 572l7 3M58.500 599.500l7-3.200" stroke="#000" stroke-width="2.200"/>
<path d="M66 575.200l8 3.400M66 596l8-3.800" stroke="#d0d080" stroke-width="1" stroke-dasharray="1 1.200"/>
<path d="M74 578.500l13.500 6-13.500 6.300" fill="none" stroke="#4a4a4a" stroke-width="1.800"/>
<!-- trim -->
<path d="M109 590l14-13" stroke="#f6f6c4" stroke-width="4.500"/>
<g stroke="#000" stroke-width="2.600" fill="none"><path d="M119 572.500l10.500 8.500M130 571l-6.500 6.500"/><path d="M100 590.500l10.500 8.500M106 593l-6 7"/></g>
<g stroke="#000" stroke-width="1.100" fill="#fff"><path d="M113 581l7.500 4M113 584.500l8-1" fill="none"/><path d="M112.500 580.500l6.500 3.500" stroke="#fff" stroke-width="1.800"/><circle cx="123" cy="585" r="2.100"/><circle cx="121" cy="589.500" r="2.100"/></g>
<!-- dome -->
<ellipse cx="157.500" cy="597" rx="13" ry="3.500" fill="#a8a8a8" filter="url(#b1)"/>
<path d="M144.500 580v12c2 6 24 6 26 0v-12z" fill="url(#gdome)"/>
<ellipse cx="157.500" cy="578.500" rx="13" ry="4" fill="#a8aee8" stroke="#707880" stroke-width="1.300"/>
<path d="M145.500 582c3 4 21 4 24 0" fill="none" stroke="#707880" stroke-width="1"/>
<path d="M146 586c4-3 7-4.500 11.500-4.500s8 1.500 11.500 4.500" fill="none" stroke="#d8d890" stroke-width="1"/>
<path d="M148 579l3 6M167 579l-3 6" stroke="#808890" stroke-width=".8"/>
<!-- faded arc arrows -->
<g fill="none" stroke="#bcbcbc" stroke-width="1.300"><path d="M197 573c-6 5-10 12-11 20" stroke-dasharray="3 1.500"/><path d="M198 572.500h8M195 580l5 5"/></g>
<path d="M206 571l3 1.500-3 1.500zM199 586.500l2.500-.5-.5-2.500zM186 591l-1.500 3 3 0z" fill="#bcbcbc"/>
<!-- row6: mirror -->
<g fill="none" stroke="#a8a8a8" stroke-width="1.200"><path d="M29.500 610v26" stroke-dasharray="5 1.500 1.500 1.500"/><path d="M27 612c-4 1-5 4-4.500 8 .5 3-1.500 4-1.500 7 0 4 1 6 1 8h7" /></g>
<path d="M33 622c3 0 4 3 3.500 6" fill="none" stroke="#d8d8d8" stroke-width="1.200"/>
<!-- star folder -->
<path d="M62 633l22-2 4 3-22 3z" fill="#c0c0c0" filter="url(#b1)"/>
<path d="M58.500 616l8-5 9 1 12 12v8l-22 4-7-2z" fill="#f3da12"/>
<path d="M60 632c2-5 8-7 14-7.500l14-.5v7l-22 5z" fill="#f8e838"/>
<path d="M62 634l22-4.500" stroke="#c8a808" stroke-width="1" fill="none"/>
<path d="M78 608.500l-1 8.500 9.500 2-8 4 1 7-6.500-5-8 3.500 4-7.500-6-6.500 9 1.500z" fill="#f6e020" stroke="#333" stroke-width="1.400" stroke-linejoin="miter"/>
</svg>

<div class="hdr" style="top:648px"><b>Position, Combine, Trim Vectors</b><i class="hbtn"></i></div>
<svg class="a" style="left:0;top:664px" width="250" height="57" viewBox="0 664 250 57">
<g fill="#e3e3e3"><rect x="13" y="669" width="41" height="33"/><rect x="56" y="669" width="40" height="33"/><rect x="98" y="669" width="40" height="33"/><rect x="140" y="669" width="40" height="33"/><rect x="182" y="669" width="40" height="33"/>
<rect x="13" y="705" width="41" height="20"/><rect x="56" y="705" width="40" height="20"/></g>
<rect x="98" y="705" width="33" height="20" fill="#f6f6f6"/><rect x="133" y="705" width="5" height="20" fill="#d6d6d6"/>
<g fill="none" stroke="#d0d0d0" stroke-width="1.300"><path d="M22 692h8M32 689l10-1M62 688h8M72 690l8-1M104 692h6M118 690l9-2M150 684h8M158 692l10-3M188 695h16M192 688h8"/></g>
<g fill="none" stroke="#767676" stroke-width="1.500">
<!-- 1 -->
<path d="M16.500 673v26" stroke-dasharray="6 1.500" stroke-width="1.200"/><rect x="28.500" y="681" width="11.500" height="11"/><path d="M20 686.500h6.500"/>
<!-- 2 -->
<path d="M83.500 673v26" stroke-dasharray="6 1.500" stroke-width="1.200"/><rect x="60.500" y="681" width="11.500" height="11"/><path d="M74 686.500h6"/>
<!-- 3 -->
<path d="M101 674.500h26" stroke-dasharray="6 1.500" stroke-width="1.200"/><rect x="109" y="686.500" width="11.500" height="11"/><path d="M114.700 678v6"/>
<!-- 4 -->
<path d="M142 698.500h26" stroke-dasharray="6 1.500" stroke-width="1.200"/><rect x="149" y="675.500" width="11.500" height="11"/><path d="M154.700 688.500v6"/>
<!-- 5 -->
<path d="M184.500 673v26M209.500 673v26" stroke-dasharray="6 1.500" stroke-width="1.200"/><rect x="191.500" y="681" width="11" height="11"/>
<!-- row2 -->
<path d="M16.500 709.500h26" stroke-dasharray="6 1.500" stroke-width="1.200"/><rect x="23.500" y="717" width="11.500" height="11"/>
<path d="M58.500 725v-15.500h25.500v15.500" stroke-dasharray="6 1.500" stroke-width="1.200"/><rect x="65.500" y="717" width="11.500" height="11"/>
<path d="M100.500 725v-15M127.500 725v-15" stroke-dasharray="1.500 1.500" stroke-width="1.200" stroke="#999"/><rect x="108" y="717" width="11.500" height="11"/>
</g>
<g fill="#767676"><path d="M19 686.500l3.500-3v6z"/><path d="M81.500 686.500l-3.500-3v6z"/><path d="M114.700 676.500l-3 3.500h6z"/><path d="M154.700 696.500l-3-3.500h6z"/><path d="M186 686.500l3-2.500v5zM208 686.500l-3-2.500v5z"/><path d="M189 684.500l2 2-2 2zM205 684.500l-2 2 2 2z"/><path d="M29.300 711l-3 3.500h6z"/><path d="M71.300 711l-3 3.500h6z"/><path d="M113.700 710.500l-2.500 3h5z"/></g>
<path d="M113.700 713v3" stroke="#767676" stroke-width="1.200"/>
<g transform="translate(135.500,707)"><path d="M-2.500 0h5M-3 3.500h6M0 3.500v4" stroke="#000" stroke-width="1.200" fill="none"/><rect x="-1.500" y="0" width="3" height="3.500" fill="#000"/></g>
<!-- arc text -->
<g font-family="Liberation Sans,sans-serif" font-size="6.500" font-weight="bold" font-style="italic" fill="#000"><text transform="translate(145,722) rotate(-60)">x</text><text transform="translate(149,715) rotate(-35)">a</text><text transform="translate(153.500,712.500) rotate(-15)">a</text><text transform="translate(160,712) rotate(15)" font-size="8">*</text><text transform="translate(164.500,716) rotate(45)">c</text></g>
<text x="185" y="719.500" font-family="Liberation Sans,sans-serif" font-size="14" font-weight="bold" fill="#000" textLength="26" lengthAdjust="spacingAndGlyphs">Nes</text>
<text x="197" y="729" font-family="Liberation Sans,sans-serif" font-size="14" font-weight="bold" fill="#000">es</text>
</svg>


<!-- bottom tabs -->
<div class="a" id="ltabs" style="left:0;top:722px;width:271px;height:25px;background:#dadada;overflow:hidden">
<svg width="270" height="26" class="a" style="left:0;top:0"><filter id="nz" x="0" y="0" width="100%" height="100%" color-interpolation-filters="sRGB"><feTurbulence type="fractalNoise" baseFrequency="0.2 0.3" numOctaves="3" seed="3"/><feColorMatrix type="matrix" values="0 0 0 0 .92  0 0 0 0 .92  0 0 0 0 .92  2.6 0 0 0 -.95"/><feGaussianBlur stdDeviation=".5"/></filter><rect width="270" height="26" fill="#d4d4d4"/><rect width="270" height="26" filter="url(#nz)"/></svg>
</div>
<svg class="a" style="left:0;top:720px" width="135" height="28" viewBox="0 0 135 28">
<path d="M0 0H60.500V18C60.500 24 59 26.500 54 26.500H6C2 26.500 0 26.500 0 26.500Z" fill="#f0f0f0" stroke="none"/>
<path d="M60.500 1V18C60.500 24 59 26.500 54 26.500H3" fill="none" stroke="#b4b4b4" stroke-width="1"/>
<path d="M62.500 24V5C62.500 3 63.500 1.500 66 1.500H125C127.500 1.500 128.500 3 128.500 5V20C128.500 24 127 26.500 123 26.500H60C62 26.500 62.500 25 62.500 23Z" fill="#f4f4f4" stroke="#b4b4b4" stroke-width="1"/>
</svg>
<div class="t" style="left:9px;top:727px;font-size:12.500px;transform:scaleX(.9)">Assistant</div>
<div class="t" style="left:71px;top:728px;font-size:12.500px;transform:scaleX(.97)">Toolpaths</div>
<!-- CENTER -->
<div class="a" style="left:276px;top:43px;width:815px;height:1px;background:#a8a8a8"></div>
<div class="a" style="left:271px;top:44px;width:2px;height:677px;background:#fdfdfd"></div>

<!-- toolbar -->
<div class="t" style="left:284.500px;top:50px;font-size:14.700px;font-weight:bold;transform:scaleX(.8);-webkit-text-stroke:.55px #000">3D</div>
<svg class="a" style="left:300px;top:44px" width="340" height="30" viewBox="0 0 340 30">
<defs>
<radialGradient id="lens" cx=".4" cy=".35" r=".7"><stop offset="0" stop-color="#eef7fd"/><stop offset="1" stop-color="#c2ddf0"/></radialGradient>
<g id="mag"><path d="M3.800 4.200L5.800 3.400 9.600 6.600 9.200 7.400 4.600 7.400Z" fill="#d2ab72"/><path d="M5.500 4.500L9.200 7.200" stroke="#b48c54" stroke-width=".8"/><circle cx="0" cy="0" r="5.500" fill="url(#lens)" stroke="#5f7690" stroke-width="1.400"/><circle cx="0" cy="0" r="6.500" fill="none" stroke="#b8cce0" stroke-width=".6" opacity=".7"/></g>
</defs>
<!-- zoom in -->
<g transform="translate(14.600,12.800)"><use href="#mag"/><path d="M-3.500 0h7M0 -3.500v7" stroke="#2d5f96" stroke-width="1.600"/></g>
<!-- zoom out -->
<g transform="translate(37.600,12.800)"><use href="#mag"/><path d="M-3.600 0h7.200" stroke="#2d5f96" stroke-width="1.800"/></g>
<!-- zoom previous -->
<g transform="translate(60.700,12.800)"><use href="#mag"/><path d="M-2.500 -1.500C0 -3.500 3 -2 3 .5 3 3 0 3.800 -1.500 3" stroke="#8aa61e" stroke-width="1.700" fill="none"/><path d="M-4 -3.200L-3.600 1 0 -1.200Z" fill="#8aa61e"/></g>
<path d="M77.500 6v18" stroke="#a6a6a6" stroke-width="1.300"/>
<!-- 1:1 -->
<g transform="translate(91.600,12.800)"><use href="#mag"/><path d="M-3 -2.200v4.600M-3.800 -1.400l.8-.8M2.800 -2.200v4.600M2 -1.400l.8-.8" stroke="#3a6a9c" stroke-width="1.100" fill="none"/><path d="M-.3 -1v.9M-.3 1v.9" stroke="#3a6a9c" stroke-width="1"/></g>
<!-- zoom box -->
<g transform="translate(114.500,12.800)"><use href="#mag"/><rect x="-3.300" y="-2.600" width="6.600" height="5.200" fill="#dcecf8" stroke="#2d5f96" stroke-width="1.400"/></g>
<!-- grey blob -->
<path d="M131.500 14c-1-4 2-7 6-7 5 0 7.500 2.500 7.500 6 0 1.500-.5 2.500-1 3l3 3.500-1.500 1.500-4-1c-4 1-8.500-1-10-6z" fill="#949494"/>
<path d="M154.500 6v18" stroke="#a6a6a6" stroke-width="1.300"/>
<!-- pressed buttons -->
<rect x="159" y="4" width="23" height="21" fill="#f8f8f8"/><path d="M159.500 25V4.500H182" stroke="#8e8e8e" fill="none"/>
<rect x="182.500" y="4" width="22" height="21" fill="#f8f8f8"/><path d="M182.500 25V4.500H204.500" stroke="#8e8e8e" fill="none"/>
<!-- icon: arrow left over dotted -->
<g stroke="#111" stroke-width="1" stroke-dasharray="1.500 1" fill="none"><path d="M166 9.500h8M166 12.500h4M166 15.500h4M166 18.500h8M166 21.500h8"/></g>
<path d="M174.500 9v13" stroke="#111" stroke-width="1.200"/>
<path d="M168.500 15l5-5v3h6v4.500h-6v3z" fill="#555" stroke="#000" stroke-width="1"/>
<!-- icon: arrow right -->
<g stroke="#111" stroke-width="1" stroke-dasharray="1.500 1" fill="none"><path d="M194 9.500h8M198 12.500h4M198 15.500h4M194 18.500h8M194 21.500h8"/></g>
<path d="M202.500 9v13" stroke="#111" stroke-width="1.200"/>
<path d="M198.500 15l-5-5v3h-6.500v4.500h6.500v3z" fill="#555" stroke="#000" stroke-width="1"/>
<!-- back arrow magnifier -->
<path d="M208 14.500l8-5v10z" fill="#5a63b8"/>
<circle cx="217" cy="13.500" r="4.200" fill="#cfe0f2" stroke="#8fa6cf" stroke-width="1.300"/>
<path d="M220 16.500l3.500 2.500" stroke="#c9a36a" stroke-width="2.400" stroke-linecap="round"/>
<path d="M231.500 6v18" stroke="#a6a6a6" stroke-width="1.300"/>
<!-- slider -->
<path d="M243.500 15h74" stroke="#7e7e7e" stroke-width="1.800"/>
<path d="M318.500 6.500h8.500v16l-3.500 3.500h-5z" fill="#f4f4f4"/>
<path d="M327.500 6v16.500l-4 3.500" stroke="#6a6a6a" stroke-width="1.400" fill="none"/>
</svg>

<!-- rulers -->
<div class="a" style="left:277px;top:74px;width:811px;height:21px;border:1px solid #8c8c8c;border-right:0;background:#f0f0f0"></div>
<div class="a" style="left:277px;top:94px;width:21px;height:590px;border-left:1px solid #8c8c8c;border-right:1px solid #8c8c8c;background:#f0f0f0"></div>
<div class="a" style="left:297px;top:75px;width:1px;height:20px;background:#8c8c8c"></div>
<svg class="a" style="left:277px;top:74px" width="800" height="21"><path d="M27.5 20v-2M32.5 20v-2M38.5 20v-2M43.5 20v-4M49.5 20v-2M54.5 20v-2M60.5 20v-2M65.5 20v-2M71.5 20v-6M77.5 20v-2M82.5 20v-2M88.5 20v-2M93.5 20v-2M99.5 20v-4M104.5 20v-2M110.5 20v-2M115.5 20v-2M121.5 20v-2M127.5 20v-6M132.5 20v-2M138.5 20v-2M143.5 20v-2M149.5 20v-2M154.5 20v-4M160.5 20v-2M166.5 20v-2M171.5 20v-2M177.5 20v-2M182.5 20v-6M188.5 20v-2M193.5 20v-2M199.5 20v-2M204.5 20v-2M210.5 20v-4M216.5 20v-2M221.5 20v-2M227.5 20v-2M232.5 20v-2M238.5 20v-6M243.5 20v-2M249.5 20v-2M254.5 20v-2M260.5 20v-2M266.5 20v-4M271.5 20v-2M277.5 20v-2M282.5 20v-2M288.5 20v-2M293.5 20v-6M299.5 20v-2M305.5 20v-2M310.5 20v-2M316.5 20v-2M321.5 20v-4M327.5 20v-2M332.5 20v-2M338.5 20v-2M343.5 20v-2M349.5 20v-6M355.5 20v-2M360.5 20v-2M366.5 20v-2M371.5 20v-2M377.5 20v-4M382.5 20v-2M388.5 20v-2M393.5 20v-2M399.5 20v-2M405.5 20v-6M410.5 20v-2M416.5 20v-2M421.5 20v-2M427.5 20v-2M432.5 20v-4M438.5 20v-2M444.5 20v-2M449.5 20v-2M455.5 20v-2M460.5 20v-6M466.5 20v-2M471.5 20v-2M477.5 20v-2M482.5 20v-2M488.5 20v-4M494.5 20v-2M499.5 20v-2M505.5 20v-2M510.5 20v-2M516.5 20v-6M521.5 20v-2M527.5 20v-2M532.5 20v-2M538.5 20v-2M544.5 20v-4M549.5 20v-2M555.5 20v-2M560.5 20v-2M566.5 20v-2M571.5 20v-6M577.5 20v-2M583.5 20v-2M588.5 20v-2M594.5 20v-2M599.5 20v-4M605.5 20v-2M610.5 20v-2M616.5 20v-2M621.5 20v-2M627.5 20v-6M633.5 20v-2M638.5 20v-2M644.5 20v-2M649.5 20v-2M655.5 20v-4M660.5 20v-2M666.5 20v-2M671.5 20v-2M677.5 20v-2M683.5 20v-6M688.5 20v-2M694.5 20v-2M699.5 20v-2M705.5 20v-2M710.5 20v-4M716.5 20v-2M722.5 20v-2M727.5 20v-2M733.5 20v-2M738.5 20v-6M744.5 20v-2M749.5 20v-2M755.5 20v-2M760.5 20v-2M766.5 20v-4M772.5 20v-2M777.5 20v-2M783.5 20v-2M788.5 20v-2" stroke="#000" stroke-width="1" fill="none" shape-rendering="crispEdges"/></svg>
<svg class="a" style="left:277px;top:94px" width="21" height="590"><path d="M21 583.5h-2M21 577.5h-2M21 572.5h-6M21 566.5h-2M21 561.5h-2M21 555.5h-2M21 550.5h-2M21 544.5h-4M21 538.5h-2M21 533.5h-2M21 527.5h-2M21 522.5h-2M21 516.5h-6M21 511.5h-2M21 505.5h-2M21 500.5h-2M21 494.5h-2M21 488.5h-4M21 483.5h-2M21 477.5h-2M21 472.5h-2M21 466.5h-2M21 461.5h-6M21 455.5h-2M21 449.5h-2M21 444.5h-2M21 438.5h-2M21 433.5h-4M21 427.5h-2M21 422.5h-2M21 416.5h-2M21 411.5h-2M21 405.5h-6M21 399.5h-2M21 394.5h-2M21 388.5h-2M21 383.5h-2M21 377.5h-4M21 372.5h-2M21 366.5h-2M21 361.5h-2M21 355.5h-2M21 349.5h-6M21 344.5h-2M21 338.5h-2M21 333.5h-2M21 327.5h-2M21 322.5h-4M21 316.5h-2M21 310.5h-2M21 305.5h-2M21 299.5h-2M21 294.5h-6M21 288.5h-2M21 283.5h-2M21 277.5h-2M21 272.5h-2M21 266.5h-4M21 260.5h-2M21 255.5h-2M21 249.5h-2M21 244.5h-2M21 238.5h-6M21 233.5h-2M21 227.5h-2M21 222.5h-2M21 216.5h-2M21 210.5h-4M21 205.5h-2M21 199.5h-2M21 194.5h-2M21 188.5h-2M21 183.5h-6M21 177.5h-2M21 171.5h-2M21 166.5h-2M21 160.5h-2M21 155.5h-4M21 149.5h-2M21 144.5h-2M21 138.5h-2M21 133.5h-2M21 127.5h-6M21 121.5h-2M21 116.5h-2M21 110.5h-2M21 105.5h-2M21 99.5h-4M21 94.5h-2M21 88.5h-2M21 83.5h-2M21 77.5h-2M21 71.5h-6M21 66.5h-2M21 60.5h-2M21 55.5h-2M21 49.5h-2M21 44.5h-4M21 38.5h-2M21 32.5h-2M21 27.5h-2M21 21.5h-2M21 16.5h-6M21 10.5h-2M21 5.5h-2" stroke="#000" stroke-width="1" fill="none" shape-rendering="crispEdges"/></svg>
<div class="t rl" style="left:317px;top:77px;width:60px;text-align:center;font-size:11px">-1200</div>
<div class="t rl" style="left:372.6px;top:77px;width:60px;text-align:center;font-size:11px">-1000</div>
<div class="t rl" style="left:428.2px;top:77px;width:60px;text-align:center;font-size:11px">-800</div>
<div class="t rl" style="left:483.8px;top:77px;width:60px;text-align:center;font-size:11px">-600</div>
<div class="t rl" style="left:539.4px;top:77px;width:60px;text-align:center;font-size:11px">-400</div>
<div class="t rl" style="left:595px;top:77px;width:60px;text-align:center;font-size:11px">-200</div>
<div class="t rl" style="left:651.1px;top:77px;width:60px;text-align:center;font-size:11px">0</div>
<div class="t rl" style="left:706.7px;top:77px;width:60px;text-align:center;font-size:11px">200</div>
<div class="t rl" style="left:762.3px;top:77px;width:60px;text-align:center;font-size:11px">400</div>
<div class="t rl" style="left:817.9px;top:77px;width:60px;text-align:center;font-size:11px">600</div>
<div class="t rl" style="left:873.5px;top:77px;width:60px;text-align:center;font-size:11px">800</div>
<div class="t rl" style="left:929.1px;top:77px;width:60px;text-align:center;font-size:11px">1000</div>
<div class="t rl" style="left:280px;top:697.8px;width:60px;text-align:center;font-size:11px;transform:rotate(-90deg);transform-origin:0 0">-1000</div>
<div class="t rl" style="left:280px;top:642.2px;width:60px;text-align:center;font-size:11px;transform:rotate(-90deg);transform-origin:0 0">-800</div>
<div class="t rl" style="left:280px;top:586.6px;width:60px;text-align:center;font-size:11px;transform:rotate(-90deg);transform-origin:0 0">-600</div>
<div class="t rl" style="left:280px;top:531px;width:60px;text-align:center;font-size:11px;transform:rotate(-90deg);transform-origin:0 0">-400</div>
<div class="t rl" style="left:280px;top:475.4px;width:60px;text-align:center;font-size:11px;transform:rotate(-90deg);transform-origin:0 0">-200</div>
<div class="t rl" style="left:280px;top:418.3px;width:60px;text-align:center;font-size:11px;transform:rotate(-90deg);transform-origin:0 0">0</div>
<div class="t rl" style="left:280px;top:362.7px;width:60px;text-align:center;font-size:11px;transform:rotate(-90deg);transform-origin:0 0">200</div>
<div class="t rl" style="left:280px;top:307.1px;width:60px;text-align:center;font-size:11px;transform:rotate(-90deg);transform-origin:0 0">400</div>
<div class="t rl" style="left:280px;top:251.5px;width:60px;text-align:center;font-size:11px;transform:rotate(-90deg);transform-origin:0 0">600</div>
<div class="t rl" style="left:280px;top:195.9px;width:60px;text-align:center;font-size:11px;transform:rotate(-90deg);transform-origin:0 0">800</div>
<div class="t rl" style="left:280px;top:140.3px;width:60px;text-align:center;font-size:11px;transform:rotate(-90deg);transform-origin:0 0">1000</div>
<div class="t" style="left:1027.500px;top:78px;font-size:9.500px;width:42px;overflow:hidden;transform:scaleX(1.02)">millimetres</div>
<div class="a" style="left:1070px;top:74px;width:18px;height:21px;background:#f4f4f4;border:1px solid;border-color:#e8e8e8 #707070 #707070 #e8e8e8;outline:0"></div>
<svg class="a" style="left:1070px;top:74px" width="18" height="21"><path d="M4.500 9.500h9l-4.500 4.500z" fill="#000"/><path d="M5 6.500h3M10 6.500h3" stroke="#000" stroke-width="1.300"/></svg>
<svg class="a" style="left:279px;top:76px" width="18" height="18"><path d="M2 8.500h14M7 3v11M11 3v11" stroke="#b0b0b0" stroke-width="1" stroke-dasharray="2 1.500" fill="none"/></svg>
<!-- canvas -->
<div class="a" style="left:298px;top:95px;width:773px;height:589px;background:#f0f0f0"></div>
<div class="a" style="left:540px;top:106px;width:285px;height:567px;background:#ffff80;border:1px solid #000"></div>
<div class="a" style="left:577px;top:158px;width:212px;height:463px;background:#2a2a2a"></div>
<svg class="a" style="left:598px;top:180px" width="170" height="420" viewBox="598 180 170 420">
<defs>
<radialGradient id="rball" cx=".4" cy=".35" r=".7"><stop offset="0" stop-color="#e4e4e4"/><stop offset=".6" stop-color="#a8a8a8"/><stop offset="1" stop-color="#5a5a5a"/></radialGradient>
<radialGradient id="rpet" cx=".5" cy=".5" r=".6"><stop offset="0" stop-color="#c8c8c8"/><stop offset="1" stop-color="#787878"/></radialGradient>
<radialGradient id="rpock" cx=".5" cy=".5" r=".5"><stop offset="0" stop-color="#727272"/><stop offset=".7" stop-color="#505050"/><stop offset="1" stop-color="#1c1c1c"/></radialGradient>
<radialGradient id="rdome" gradientUnits="userSpaceOnUse" cx="683" cy="389.750" r="59" gradientTransform="translate(683,389.750) scale(.66,1) translate(-683,-389.750)"><stop offset="0" stop-color="#262626"/><stop offset=".3" stop-color="#343434"/><stop offset=".46" stop-color="#7c7c7c"/><stop offset=".62" stop-color="#dcdcdc"/><stop offset=".72" stop-color="#f0f0f0"/><stop offset=".82" stop-color="#c4c4c4"/><stop offset=".93" stop-color="#6c6c6c"/><stop offset="1" stop-color="#404040"/></radialGradient>
<linearGradient id="rfrL" gradientUnits="userSpaceOnUse" x1="601" y1="0" x2="621" y2="0"><stop offset="0" stop-color="#3c3c3c"/><stop offset=".08" stop-color="#7e7e7e"/><stop offset=".2" stop-color="#bebebe"/><stop offset=".3" stop-color="#929292"/><stop offset=".4" stop-color="#bcc0c0"/><stop offset=".47" stop-color="#8c8c8c"/><stop offset=".62" stop-color="#32322a"/><stop offset=".655" stop-color="#e6e6a0"/><stop offset=".695" stop-color="#fafabc"/><stop offset=".73" stop-color="#a8a868"/><stop offset=".745" stop-color="#c4c4c4"/><stop offset="1" stop-color="#c6c6c6"/></linearGradient>
<linearGradient id="rfrT" gradientUnits="userSpaceOnUse" x1="0" y1="182" x2="0" y2="198"><stop offset="0" stop-color="#3c3c3c"/><stop offset=".1" stop-color="#7e7e7e"/><stop offset=".25" stop-color="#bebebe"/><stop offset=".375" stop-color="#929292"/><stop offset=".5" stop-color="#bcc0c0"/><stop offset=".59" stop-color="#8c8c8c"/><stop offset=".78" stop-color="#32322a"/><stop offset=".84" stop-color="#e6e6a0"/><stop offset=".9" stop-color="#fafab4"/><stop offset="1" stop-color="#f6f696"/></linearGradient>
<filter id="rbl2" x="-20%" y="-20%" width="140%" height="140%"><feGaussianBlur stdDeviation="1.6"/></filter>
<filter id="rbl3" x="-50%" y="-50%" width="200%" height="200%"><feGaussianBlur stdDeviation="2.6"/></filter>
<filter id="rbl4" x="-50%" y="-50%" width="200%" height="200%"><feGaussianBlur stdDeviation="4"/></filter>
<clipPath id="rdc"><path d="M646.500 392C646.500 352 661 330 683 329.500H686V392Z"/></clipPath>
<filter id="rbl" x="-5%" y="-5%" width="110%" height="110%"><feGaussianBlur stdDeviation=".45"/></filter>
<clipPath id="rq"><rect x="621" y="198" width="62" height="191.750"/></clipPath>
<g id="rquad" clip-path="url(#rq)"><g filter="url(#rbl2)"><path d="M639 217L672 217 666 232 657 241 654 256 660 274 638 276 632 263 645 251 648 236Z" fill="#565656"/><ellipse cx="655" cy="228" rx="9" ry="7" fill="#686868"/><ellipse cx="647" cy="261" rx="7" ry="9" fill="#707070"/></g><path d="M621 202C630 198 642 199 652 201" fill="none" stroke="#505050" stroke-width="6.640000000000001" stroke-linecap="round" stroke-linejoin="round"/><path d="M621 202C630 198 642 199 652 201" fill="none" stroke="#949494" stroke-width="5.040000000000001" stroke-linecap="round" stroke-linejoin="round"/><path d="M621 202C630 198 642 199 652 201" fill="none" stroke="#bcbcbc" stroke-width="3.1248000000000005" stroke-linecap="round" stroke-linejoin="round"/><path d="M621 202C630 198 642 199 652 201" fill="none" stroke="#dedede" stroke-width="1.1088000000000002" stroke-linecap="round" stroke-linejoin="round" opacity=".7"/><path d="M622 209C625 205 630 204 634 205" fill="none" stroke="#505050" stroke-width="5.5200000000000005" stroke-linecap="round" stroke-linejoin="round"/><path d="M622 209C625 205 630 204 634 205" fill="none" stroke="#949494" stroke-width="3.9200000000000004" stroke-linecap="round" stroke-linejoin="round"/><path d="M622 209C625 205 630 204 634 205" fill="none" stroke="#bcbcbc" stroke-width="2.4304" stroke-linecap="round" stroke-linejoin="round"/><path d="M622 209C625 205 630 204 634 205" fill="none" stroke="#dedede" stroke-width="0.8624" stroke-linecap="round" stroke-linejoin="round" opacity=".7"/><circle cx="623.5" cy="213.5" r="3.0" fill="#444"/><circle cx="623.5" cy="213.5" r="2.2" fill="url(#rball)"/><path d="M670 207C656 201 642 203 630 213C623 221 623 234 627 241C631 248 641 248 645.500 242C649 236 645 227 639 227C633 227 631 232 633 236" fill="none" stroke="#505050" stroke-width="10.112" stroke-linecap="round" stroke-linejoin="round"/><path d="M670 207C656 201 642 203 630 213C623 221 623 234 627 241C631 248 641 248 645.500 242C649 236 645 227 639 227C633 227 631 232 633 236" fill="none" stroke="#949494" stroke-width="8.512" stroke-linecap="round" stroke-linejoin="round"/><path d="M670 207C656 201 642 203 630 213C623 221 623 234 627 241C631 248 641 248 645.500 242C649 236 645 227 639 227C633 227 631 232 633 236" fill="none" stroke="#bcbcbc" stroke-width="5.27744" stroke-linecap="round" stroke-linejoin="round"/><path d="M670 207C656 201 642 203 630 213C623 221 623 234 627 241C631 248 641 248 645.500 242C649 236 645 227 639 227C633 227 631 232 633 236" fill="none" stroke="#dedede" stroke-width="1.87264" stroke-linecap="round" stroke-linejoin="round" opacity=".7"/><path d="M672 216C662 210 650 210 644 214C639 218 637 222 637 226" fill="none" stroke="#505050" stroke-width="7.6480000000000015" stroke-linecap="round" stroke-linejoin="round"/><path d="M672 216C662 210 650 210 644 214C639 218 637 222 637 226" fill="none" stroke="#949494" stroke-width="6.048000000000001" stroke-linecap="round" stroke-linejoin="round"/><path d="M672 216C662 210 650 210 644 214C639 218 637 222 637 226" fill="none" stroke="#bcbcbc" stroke-width="3.7497600000000006" stroke-linecap="round" stroke-linejoin="round"/><path d="M672 216C662 210 650 210 644 214C639 218 637 222 637 226" fill="none" stroke="#dedede" stroke-width="1.3305600000000002" stroke-linecap="round" stroke-linejoin="round" opacity=".7"/><circle cx="636.5" cy="234" r="3.8" fill="#444"/><circle cx="636.5" cy="234" r="3" fill="url(#rball)"/><path d="M630 249C631 255 634 260 638 264" fill="none" stroke="#505050" stroke-width="5.408" stroke-linecap="round" stroke-linejoin="round"/><path d="M630 249C631 255 634 260 638 264" fill="none" stroke="#949494" stroke-width="3.8080000000000003" stroke-linecap="round" stroke-linejoin="round"/><path d="M630 249C631 255 634 260 638 264" fill="none" stroke="#bcbcbc" stroke-width="2.36096" stroke-linecap="round" stroke-linejoin="round"/><path d="M630 249C631 255 634 260 638 264" fill="none" stroke="#dedede" stroke-width="0.8377600000000001" stroke-linecap="round" stroke-linejoin="round" opacity=".7"/><path d="M632.500 266C633 259 623 258.500 622.500 265C622.500 270 630 271 630 266" fill="none" stroke="#505050" stroke-width="4.736000000000001" stroke-linecap="round" stroke-linejoin="round"/><path d="M632.500 266C633 259 623 258.500 622.500 265C622.500 270 630 271 630 266" fill="none" stroke="#949494" stroke-width="3.136" stroke-linecap="round" stroke-linejoin="round"/><path d="M632.500 266C633 259 623 258.500 622.500 265C622.500 270 630 271 630 266" fill="none" stroke="#bcbcbc" stroke-width="1.94432" stroke-linecap="round" stroke-linejoin="round"/><path d="M632.500 266C633 259 623 258.500 622.500 265C622.500 270 630 271 630 266" fill="none" stroke="#dedede" stroke-width="0.68992" stroke-linecap="round" stroke-linejoin="round" opacity=".7"/><circle cx="627" cy="264.5" r="2.8" fill="#444"/><circle cx="627" cy="264.5" r="2" fill="url(#rball)"/><circle cx="626.4" cy="275" r="4.0" fill="#444"/><circle cx="626.4" cy="275" r="3.2" fill="url(#rball)"/><circle cx="666.5" cy="242" r="9.920000000000002" fill="#484848"/><ellipse cx="666.5" cy="234.808" rx="4.216" ry="6.2" transform="rotate(10.0 666.5 242)" fill="url(#rpet)" stroke="#555" stroke-width=".5"/><ellipse cx="666.5" cy="234.808" rx="4.216" ry="6.2" transform="rotate(70.0 666.5 242)" fill="url(#rpet)" stroke="#555" stroke-width=".5"/><ellipse cx="666.5" cy="234.808" rx="4.216" ry="6.2" transform="rotate(130.0 666.5 242)" fill="url(#rpet)" stroke="#555" stroke-width=".5"/><ellipse cx="666.5" cy="234.808" rx="4.216" ry="6.2" transform="rotate(190.0 666.5 242)" fill="url(#rpet)" stroke="#555" stroke-width=".5"/><ellipse cx="666.5" cy="234.808" rx="4.216" ry="6.2" transform="rotate(250.0 666.5 242)" fill="url(#rpet)" stroke="#555" stroke-width=".5"/><ellipse cx="666.5" cy="234.808" rx="4.216" ry="6.2" transform="rotate(310.0 666.5 242)" fill="url(#rpet)" stroke="#555" stroke-width=".5"/><circle cx="666.5" cy="242" r="3.9000000000000004" fill="#444"/><circle cx="666.5" cy="242" r="3.1" fill="url(#rball)"/><path d="M683 196.500V215C680 212 678 205 678 196.500Z" fill="#ffff80"/><path d="M673 199C672 208 676 216 683 219" fill="none" stroke="#505050" stroke-width="7.76" stroke-linecap="round" stroke-linejoin="round"/><path d="M673 199C672 208 676 216 683 219" fill="none" stroke="#949494" stroke-width="6.16" stroke-linecap="round" stroke-linejoin="round"/><path d="M673 199C672 208 676 216 683 219" fill="none" stroke="#bcbcbc" stroke-width="3.8192" stroke-linecap="round" stroke-linejoin="round"/><path d="M673 199C672 208 676 216 683 219" fill="none" stroke="#dedede" stroke-width="1.3552" stroke-linecap="round" stroke-linejoin="round" opacity=".7"/><path d="M654 196.500H671L668 201 660 200Z" fill="#ffff80"/><path d="M680 222C677 228 677 236 680.500 242" fill="none" stroke="#505050" stroke-width="8.32" stroke-linecap="round" stroke-linejoin="round"/><path d="M680 222C677 228 677 236 680.500 242" fill="none" stroke="#949494" stroke-width="6.720000000000001" stroke-linecap="round" stroke-linejoin="round"/><path d="M680 222C677 228 677 236 680.500 242" fill="none" stroke="#bcbcbc" stroke-width="4.1664" stroke-linecap="round" stroke-linejoin="round"/><path d="M680 222C677 228 677 236 680.500 242" fill="none" stroke="#dedede" stroke-width="1.4784000000000002" stroke-linecap="round" stroke-linejoin="round" opacity=".7"/><path d="M683 232L679.500 238M683 240L680 236" stroke="#222" stroke-width="1.200"/><path d="M680.500 248V290" fill="none" stroke="#505050" stroke-width="8.88" stroke-linecap="round" stroke-linejoin="round"/><path d="M680.500 248V290" fill="none" stroke="#949494" stroke-width="7.280000000000001" stroke-linecap="round" stroke-linejoin="round"/><path d="M680.500 248V290" fill="none" stroke="#bcbcbc" stroke-width="4.5136" stroke-linecap="round" stroke-linejoin="round"/><path d="M680.500 248V290" fill="none" stroke="#dedede" stroke-width="1.6016000000000004" stroke-linecap="round" stroke-linejoin="round" opacity=".7"/><path d="M662 257.500C669 255 673 262 674 271C675 279 676 284 677 288" fill="none" stroke="#505050" stroke-width="7.76" stroke-linecap="round" stroke-linejoin="round"/><path d="M662 257.500C669 255 673 262 674 271C675 279 676 284 677 288" fill="none" stroke="#949494" stroke-width="6.16" stroke-linecap="round" stroke-linejoin="round"/><path d="M662 257.500C669 255 673 262 674 271C675 279 676 284 677 288" fill="none" stroke="#bcbcbc" stroke-width="3.8192" stroke-linecap="round" stroke-linejoin="round"/><path d="M662 257.500C669 255 673 262 674 271C675 279 676 284 677 288" fill="none" stroke="#dedede" stroke-width="1.3552" stroke-linecap="round" stroke-linejoin="round" opacity=".7"/><circle cx="661.4" cy="257.5" r="4.6" fill="#444"/><circle cx="661.4" cy="257.5" r="3.8" fill="url(#rball)"/><path d="M672 249C676 251 677 256 677 262" fill="none" stroke="#505050" stroke-width="4.960000000000001" stroke-linecap="round" stroke-linejoin="round"/><path d="M672 249C676 251 677 256 677 262" fill="none" stroke="#949494" stroke-width="3.3600000000000003" stroke-linecap="round" stroke-linejoin="round"/><path d="M672 249C676 251 677 256 677 262" fill="none" stroke="#bcbcbc" stroke-width="2.0832" stroke-linecap="round" stroke-linejoin="round"/><path d="M672 249C676 251 677 256 677 262" fill="none" stroke="#dedede" stroke-width="0.7392000000000001" stroke-linecap="round" stroke-linejoin="round" opacity=".7"/><circle cx="658.5" cy="275.7" r="5.0" fill="#444"/><circle cx="658.5" cy="275.7" r="4.2" fill="url(#rball)"/><path d="M657 282C661 287 667 287 671 284" fill="none" stroke="#505050" stroke-width="5.184000000000001" stroke-linecap="round" stroke-linejoin="round"/><path d="M657 282C661 287 667 287 671 284" fill="none" stroke="#949494" stroke-width="3.5840000000000005" stroke-linecap="round" stroke-linejoin="round"/><path d="M657 282C661 287 667 287 671 284" fill="none" stroke="#bcbcbc" stroke-width="2.2220800000000005" stroke-linecap="round" stroke-linejoin="round"/><path d="M657 282C661 287 667 287 671 284" fill="none" stroke="#dedede" stroke-width="0.7884800000000001" stroke-linecap="round" stroke-linejoin="round" opacity=".7"/><g transform="translate(635,299) rotate(18)"><path d="M0 0C-4.2 -7.199999999999999 -4.2 -16.799999999999997 0 -24 C4.2 -16.799999999999997 4.2 -7.199999999999999 0 0Z" fill="#a2a2a2" stroke="#505050" stroke-width=".7"/><path d="M0 0V-21.6" stroke="#d0d0d0" stroke-width=".7"/></g><g transform="translate(634,298) rotate(-22)"><path d="M0 0C-3.4 -4.2 -3.4 -9.799999999999999 0 -14 C3.4 -9.799999999999999 3.4 -4.2 0 0Z" fill="#a2a2a2" stroke="#505050" stroke-width=".7"/><path d="M0 0V-12.6" stroke="#d0d0d0" stroke-width=".7"/></g><g transform="translate(641,298) rotate(48)"><path d="M0 0C-3.4 -4.2 -3.4 -9.799999999999999 0 -14 C3.4 -9.799999999999999 3.4 -4.2 0 0Z" fill="#a2a2a2" stroke="#505050" stroke-width=".7"/><path d="M0 0V-12.6" stroke="#d0d0d0" stroke-width=".7"/></g><g transform="translate(630,292) rotate(-10)"><path d="M0 0C-2.8 -2.6999999999999997 -2.8 -6.3 0 -9 C2.8 -6.3 2.8 -2.6999999999999997 0 0Z" fill="#a2a2a2" stroke="#505050" stroke-width=".7"/><path d="M0 0V-8.1" stroke="#d0d0d0" stroke-width=".7"/></g><circle cx="633.7" cy="303" r="9.200000000000001" fill="#484848"/><ellipse cx="633.7" cy="296.33" rx="3.91" ry="5.75" transform="rotate(10.0 633.7 303)" fill="url(#rpet)" stroke="#555" stroke-width=".5"/><ellipse cx="633.7" cy="296.33" rx="3.91" ry="5.75" transform="rotate(61.42857142857143 633.7 303)" fill="url(#rpet)" stroke="#555" stroke-width=".5"/><ellipse cx="633.7" cy="296.33" rx="3.91" ry="5.75" transform="rotate(112.85714285714286 633.7 303)" fill="url(#rpet)" stroke="#555" stroke-width=".5"/><ellipse cx="633.7" cy="296.33" rx="3.91" ry="5.75" transform="rotate(164.28571428571428 633.7 303)" fill="url(#rpet)" stroke="#555" stroke-width=".5"/><ellipse cx="633.7" cy="296.33" rx="3.91" ry="5.75" transform="rotate(215.71428571428572 633.7 303)" fill="url(#rpet)" stroke="#555" stroke-width=".5"/><ellipse cx="633.7" cy="296.33" rx="3.91" ry="5.75" transform="rotate(267.14285714285717 633.7 303)" fill="url(#rpet)" stroke="#555" stroke-width=".5"/><ellipse cx="633.7" cy="296.33" rx="3.91" ry="5.75" transform="rotate(318.57142857142856 633.7 303)" fill="url(#rpet)" stroke="#555" stroke-width=".5"/><circle cx="633.7" cy="303" r="3.675" fill="#444"/><circle cx="633.7" cy="303" r="2.875" fill="url(#rball)"/><path d="M674 282.500L654 302.500" fill="none" stroke="#505050" stroke-width="10.112" stroke-linecap="butt" stroke-linejoin="round"/><path d="M674 282.500L654 302.500" fill="none" stroke="#949494" stroke-width="8.512" stroke-linecap="butt" stroke-linejoin="round"/><path d="M674 282.500L654 302.500" fill="none" stroke="#bcbcbc" stroke-width="5.27744" stroke-linecap="butt" stroke-linejoin="round"/><path d="M674 282.500L654 302.500" fill="none" stroke="#dedede" stroke-width="1.87264" stroke-linecap="butt" stroke-linejoin="round" opacity=".7"/><path d="M659.500 290l6.500 6.500M656.500 293l6.500 6.500M662.500 287l6.500 6.500" stroke="#555" stroke-width="1"/><path d="M651 298L658.500 305.500" fill="none" stroke="#505050" stroke-width="4.960000000000001" stroke-linecap="round" stroke-linejoin="round"/><path d="M651 298L658.500 305.500" fill="none" stroke="#949494" stroke-width="3.3600000000000003" stroke-linecap="round" stroke-linejoin="round"/><path d="M651 298L658.500 305.500" fill="none" stroke="#bcbcbc" stroke-width="2.0832" stroke-linecap="round" stroke-linejoin="round"/><path d="M651 298L658.500 305.500" fill="none" stroke="#dedede" stroke-width="0.7392000000000001" stroke-linecap="round" stroke-linejoin="round" opacity=".7"/><path d="M683 281.500C674 290 674 304 683 312.500Z" fill="#9a9a9a" stroke="#4a4a4a" stroke-width="1.200"/><path d="M683 286C678 292 678 302 683 308Z" fill="#c4c4c4" stroke="#5a5a5a" stroke-width="1"/><path d="M654 302.500C642 316 629.500 338 625.500 361C624 372 627 381 636 384.500C643 386 648 380 646.500 373C645 367 637 366 633.500 371" fill="none" stroke="#505050" stroke-width="8.544" stroke-linecap="round" stroke-linejoin="round"/><path d="M654 302.500C642 316 629.500 338 625.500 361C624 372 627 381 636 384.500C643 386 648 380 646.500 373C645 367 637 366 633.500 371" fill="none" stroke="#949494" stroke-width="6.944000000000001" stroke-linecap="round" stroke-linejoin="round"/><path d="M654 302.500C642 316 629.500 338 625.500 361C624 372 627 381 636 384.500C643 386 648 380 646.500 373C645 367 637 366 633.500 371" fill="none" stroke="#bcbcbc" stroke-width="4.305280000000001" stroke-linecap="round" stroke-linejoin="round"/><path d="M654 302.500C642 316 629.500 338 625.500 361C624 372 627 381 636 384.500C643 386 648 380 646.500 373C645 367 637 366 633.500 371" fill="none" stroke="#dedede" stroke-width="1.5276800000000001" stroke-linecap="round" stroke-linejoin="round" opacity=".7"/><path d="M642.500 376.500A5.600 5.600 0 1 0 631.500 376.500A5.600 5.600 0 1 0 642.500 376.500" fill="none" stroke="#505050" stroke-width="5.408" stroke-linecap="round" stroke-linejoin="round"/><path d="M642.500 376.500A5.600 5.600 0 1 0 631.500 376.500A5.600 5.600 0 1 0 642.500 376.500" fill="none" stroke="#949494" stroke-width="3.8080000000000003" stroke-linecap="round" stroke-linejoin="round"/><path d="M642.500 376.500A5.600 5.600 0 1 0 631.500 376.500A5.600 5.600 0 1 0 642.500 376.500" fill="none" stroke="#bcbcbc" stroke-width="2.36096" stroke-linecap="round" stroke-linejoin="round"/><path d="M642.500 376.500A5.600 5.600 0 1 0 631.500 376.500A5.600 5.600 0 1 0 642.500 376.500" fill="none" stroke="#dedede" stroke-width="0.8377600000000001" stroke-linecap="round" stroke-linejoin="round" opacity=".7"/><circle cx="637" cy="376.5" r="3.8" fill="#444"/><circle cx="637" cy="376.5" r="3" fill="url(#rball)"/><path d="M624 320C622.500 330 622.500 340 624 349" fill="none" stroke="#505050" stroke-width="6.304" stroke-linecap="round" stroke-linejoin="round"/><path d="M624 320C622.500 330 622.500 340 624 349" fill="none" stroke="#949494" stroke-width="4.704000000000001" stroke-linecap="round" stroke-linejoin="round"/><path d="M624 320C622.500 330 622.500 340 624 349" fill="none" stroke="#bcbcbc" stroke-width="2.9164800000000004" stroke-linecap="round" stroke-linejoin="round"/><path d="M624 320C622.500 330 622.500 340 624 349" fill="none" stroke="#dedede" stroke-width="1.0348800000000002" stroke-linecap="round" stroke-linejoin="round" opacity=".7"/><path d="M630 322C627 326 626 330 626 334" fill="none" stroke="#505050" stroke-width="4.960000000000001" stroke-linecap="round" stroke-linejoin="round"/><path d="M630 322C627 326 626 330 626 334" fill="none" stroke="#949494" stroke-width="3.3600000000000003" stroke-linecap="round" stroke-linejoin="round"/><path d="M630 322C627 326 626 330 626 334" fill="none" stroke="#bcbcbc" stroke-width="2.0832" stroke-linecap="round" stroke-linejoin="round"/><path d="M630 322C627 326 626 330 626 334" fill="none" stroke="#dedede" stroke-width="0.7392000000000001" stroke-linecap="round" stroke-linejoin="round" opacity=".7"/><path d="M622.500 356C622 364 622 372 623 380" fill="none" stroke="#505050" stroke-width="4.5120000000000005" stroke-linecap="round" stroke-linejoin="round"/><path d="M622.500 356C622 364 622 372 623 380" fill="none" stroke="#949494" stroke-width="2.9120000000000004" stroke-linecap="round" stroke-linejoin="round"/><path d="M622.500 356C622 364 622 372 623 380" fill="none" stroke="#bcbcbc" stroke-width="1.8054400000000002" stroke-linecap="round" stroke-linejoin="round"/><path d="M622.500 356C622 364 622 372 623 380" fill="none" stroke="#dedede" stroke-width="0.6406400000000001" stroke-linecap="round" stroke-linejoin="round" opacity=".7"/><path d="M673 305C668 303 656 305 653.500 312C652 318 658 322 662 319C665 316 662 312 659 313" fill="none" stroke="#505050" stroke-width="5.184000000000001" stroke-linecap="round" stroke-linejoin="round"/><path d="M673 305C668 303 656 305 653.500 312C652 318 658 322 662 319C665 316 662 312 659 313" fill="none" stroke="#949494" stroke-width="3.5840000000000005" stroke-linecap="round" stroke-linejoin="round"/><path d="M673 305C668 303 656 305 653.500 312C652 318 658 322 662 319C665 316 662 312 659 313" fill="none" stroke="#bcbcbc" stroke-width="2.2220800000000005" stroke-linecap="round" stroke-linejoin="round"/><path d="M673 305C668 303 656 305 653.500 312C652 318 658 322 662 319C665 316 662 312 659 313" fill="none" stroke="#dedede" stroke-width="0.7884800000000001" stroke-linecap="round" stroke-linejoin="round" opacity=".7"/><circle cx="658.5" cy="315.5" r="2.7" fill="#444"/><circle cx="658.5" cy="315.5" r="1.9" fill="url(#rball)"/><path d="M666 309C671 314 677 317 683 316.500" fill="none" stroke="#505050" stroke-width="5.6320000000000014" stroke-linecap="round" stroke-linejoin="round"/><path d="M666 309C671 314 677 317 683 316.500" fill="none" stroke="#949494" stroke-width="4.032000000000001" stroke-linecap="round" stroke-linejoin="round"/><path d="M666 309C671 314 677 317 683 316.500" fill="none" stroke="#bcbcbc" stroke-width="2.4998400000000007" stroke-linecap="round" stroke-linejoin="round"/><path d="M666 309C671 314 677 317 683 316.500" fill="none" stroke="#dedede" stroke-width="0.8870400000000002" stroke-linecap="round" stroke-linejoin="round" opacity=".7"/><circle cx="682.7" cy="320.5" r="3.8" fill="#444"/><circle cx="682.7" cy="320.5" r="3" fill="url(#rball)"/><path d="M664 322C656 324 647 328 643.500 334C641 340 646 343 650 341C653 339 651.500 335 649 335.500" fill="none" stroke="#505050" stroke-width="4.960000000000001" stroke-linecap="round" stroke-linejoin="round"/><path d="M664 322C656 324 647 328 643.500 334C641 340 646 343 650 341C653 339 651.500 335 649 335.500" fill="none" stroke="#949494" stroke-width="3.3600000000000003" stroke-linecap="round" stroke-linejoin="round"/><path d="M664 322C656 324 647 328 643.500 334C641 340 646 343 650 341C653 339 651.500 335 649 335.500" fill="none" stroke="#bcbcbc" stroke-width="2.0832" stroke-linecap="round" stroke-linejoin="round"/><path d="M664 322C656 324 647 328 643.500 334C641 340 646 343 650 341C653 339 651.500 335 649 335.500" fill="none" stroke="#dedede" stroke-width="0.7392000000000001" stroke-linecap="round" stroke-linejoin="round" opacity=".7"/><circle cx="648.3" cy="337" r="2.9000000000000004" fill="#444"/><circle cx="648.3" cy="337" r="2.1" fill="url(#rball)"/><path d="M641 329C638 336 637.500 346 639 354C640 359 641 362 642 364" fill="none" stroke="#505050" stroke-width="5.408" stroke-linecap="round" stroke-linejoin="round"/><path d="M641 329C638 336 637.500 346 639 354C640 359 641 362 642 364" fill="none" stroke="#949494" stroke-width="3.8080000000000003" stroke-linecap="round" stroke-linejoin="round"/><path d="M641 329C638 336 637.500 346 639 354C640 359 641 362 642 364" fill="none" stroke="#bcbcbc" stroke-width="2.36096" stroke-linecap="round" stroke-linejoin="round"/><path d="M641 329C638 336 637.500 346 639 354C640 359 641 362 642 364" fill="none" stroke="#dedede" stroke-width="0.8377600000000001" stroke-linecap="round" stroke-linejoin="round" opacity=".7"/><path d="M637 346C632 348 629 352 630 356.500C631 361 637.500 360.500 637.500 356C637.500 353 634 352.500 633.500 355" fill="none" stroke="#505050" stroke-width="4.736000000000001" stroke-linecap="round" stroke-linejoin="round"/><path d="M637 346C632 348 629 352 630 356.500C631 361 637.500 360.500 637.500 356C637.500 353 634 352.500 633.500 355" fill="none" stroke="#949494" stroke-width="3.136" stroke-linecap="round" stroke-linejoin="round"/><path d="M637 346C632 348 629 352 630 356.500C631 361 637.500 360.500 637.500 356C637.500 353 634 352.500 633.500 355" fill="none" stroke="#bcbcbc" stroke-width="1.94432" stroke-linecap="round" stroke-linejoin="round"/><path d="M637 346C632 348 629 352 630 356.500C631 361 637.500 360.500 637.500 356C637.500 353 634 352.500 633.500 355" fill="none" stroke="#dedede" stroke-width="0.68992" stroke-linecap="round" stroke-linejoin="round" opacity=".7"/><circle cx="633.9" cy="355.6" r="2.6" fill="#444"/><circle cx="633.9" cy="355.6" r="1.8" fill="url(#rball)"/><g clip-path="url(#rdc)"><rect x="640" y="325" width="45" height="66" fill="#4c4c4c"/><ellipse cx="683" cy="389.750" rx="23.500" ry="41" fill="none" stroke="#dcdcdc" stroke-width="16" filter="url(#rbl4)"/><ellipse cx="683" cy="347" rx="21" ry="8" fill="#ececec" filter="url(#rbl3)" opacity=".75"/><ellipse cx="683" cy="389.750" rx="23.500" ry="41" fill="none" stroke="#f2f2f2" stroke-width="5" filter="url(#rbl3)" opacity=".55"/><ellipse cx="653" cy="389.750" rx="9" ry="24" fill="#4a4a4a" filter="url(#rbl3)" opacity=".8"/><ellipse cx="683" cy="389.750" rx="15" ry="20" fill="#202020" filter="url(#rbl3)"/><ellipse cx="683" cy="360" rx="3.500" ry="7" fill="#5a5a5a" opacity=".6" filter="url(#rbl2)"/></g><path d="M642 369C642 352 650.500 338 663.500 329.500C670 326 676 325.200 683 325.200" fill="none" stroke="#505050" stroke-width="8.544" stroke-linecap="round" stroke-linejoin="round"/><path d="M642 369C642 352 650.500 338 663.500 329.500C670 326 676 325.200 683 325.200" fill="none" stroke="#949494" stroke-width="6.944000000000001" stroke-linecap="round" stroke-linejoin="round"/><path d="M642 369C642 352 650.500 338 663.500 329.500C670 326 676 325.200 683 325.200" fill="none" stroke="#bcbcbc" stroke-width="4.305280000000001" stroke-linecap="round" stroke-linejoin="round"/><path d="M642 369C642 352 650.500 338 663.500 329.500C670 326 676 325.200 683 325.200" fill="none" stroke="#dedede" stroke-width="1.5276800000000001" stroke-linecap="round" stroke-linejoin="round" opacity=".7"/><circle cx="682.8" cy="366" r="3.7" fill="#444"/><circle cx="682.8" cy="366" r="2.9" fill="url(#rball)"/><path d="M683 369.500C680.500 379 674 386 664 389.750H683Z" fill="#a6a6a6" stroke="#4a4a4a" stroke-width="1"/><path d="M683 374C681.500 381 677 386 671 389.750H683Z" fill="#c2c2c2"/><path d="M676.500 380C674 376 674.500 371 677 367" fill="none" stroke="#505050" stroke-width="4.5120000000000005" stroke-linecap="round" stroke-linejoin="round"/><path d="M676.500 380C674 376 674.500 371 677 367" fill="none" stroke="#949494" stroke-width="2.9120000000000004" stroke-linecap="round" stroke-linejoin="round"/><path d="M676.500 380C674 376 674.500 371 677 367" fill="none" stroke="#bcbcbc" stroke-width="1.8054400000000002" stroke-linecap="round" stroke-linejoin="round"/><path d="M676.500 380C674 376 674.500 371 677 367" fill="none" stroke="#dedede" stroke-width="0.6406400000000001" stroke-linecap="round" stroke-linejoin="round" opacity=".7"/><path d="M672 384C668 381 667.500 376 669.500 372" fill="none" stroke="#505050" stroke-width="4.5120000000000005" stroke-linecap="round" stroke-linejoin="round"/><path d="M672 384C668 381 667.500 376 669.500 372" fill="none" stroke="#949494" stroke-width="2.9120000000000004" stroke-linecap="round" stroke-linejoin="round"/><path d="M672 384C668 381 667.500 376 669.500 372" fill="none" stroke="#bcbcbc" stroke-width="1.8054400000000002" stroke-linecap="round" stroke-linejoin="round"/><path d="M672 384C668 381 667.500 376 669.500 372" fill="none" stroke="#dedede" stroke-width="0.6406400000000001" stroke-linecap="round" stroke-linejoin="round" opacity=".7"/><path d="M667.500 387C664 386 662 383 662.500 380" fill="none" stroke="#505050" stroke-width="4.064" stroke-linecap="round" stroke-linejoin="round"/><path d="M667.500 387C664 386 662 383 662.500 380" fill="none" stroke="#949494" stroke-width="2.4640000000000004" stroke-linecap="round" stroke-linejoin="round"/><path d="M667.500 387C664 386 662 383 662.500 380" fill="none" stroke="#bcbcbc" stroke-width="1.5276800000000001" stroke-linecap="round" stroke-linejoin="round"/><path d="M667.500 387C664 386 662 383 662.500 380" fill="none" stroke="#dedede" stroke-width="0.5420800000000001" stroke-linecap="round" stroke-linejoin="round" opacity=".7"/><path d="M648 389.750H667" fill="none" stroke="#505050" stroke-width="6.304" stroke-linecap="round" stroke-linejoin="round"/><path d="M648 389.750H667" fill="none" stroke="#949494" stroke-width="4.704000000000001" stroke-linecap="round" stroke-linejoin="round"/><path d="M648 389.750H667" fill="none" stroke="#bcbcbc" stroke-width="2.9164800000000004" stroke-linecap="round" stroke-linejoin="round"/><path d="M648 389.750H667" fill="none" stroke="#dedede" stroke-width="1.0348800000000002" stroke-linecap="round" stroke-linejoin="round" opacity=".7"/><path d="M646 388C648 380 653 375 660 374C658 379 656 384 655 388Z" fill="#a4a4a4" stroke="#4c4c4c" stroke-width=".8"/><path d="M649 387C650 382 653 378 657 376.500M652.500 387.500C653 383 655 380 658 378" fill="none" stroke="#5a5a5a" stroke-width=".9"/><path d="M621.500 389.700C626 385 632 385 637 389.700" fill="none" stroke="#505050" stroke-width="5.408" stroke-linecap="round" stroke-linejoin="round"/><path d="M621.500 389.700C626 385 632 385 637 389.700" fill="none" stroke="#949494" stroke-width="3.8080000000000003" stroke-linecap="round" stroke-linejoin="round"/><path d="M621.500 389.700C626 385 632 385 637 389.700" fill="none" stroke="#bcbcbc" stroke-width="2.36096" stroke-linecap="round" stroke-linejoin="round"/><path d="M621.500 389.700C626 385 632 385 637 389.700" fill="none" stroke="#dedede" stroke-width="0.8377600000000001" stroke-linecap="round" stroke-linejoin="round" opacity=".7"/><path d="M637 389.700C641 388 645 388.500 648 389.700" fill="none" stroke="#505050" stroke-width="4.960000000000001" stroke-linecap="round" stroke-linejoin="round"/><path d="M637 389.700C641 388 645 388.500 648 389.700" fill="none" stroke="#949494" stroke-width="3.3600000000000003" stroke-linecap="round" stroke-linejoin="round"/><path d="M637 389.700C641 388 645 388.500 648 389.700" fill="none" stroke="#bcbcbc" stroke-width="2.0832" stroke-linecap="round" stroke-linejoin="round"/><path d="M637 389.700C641 388 645 388.500 648 389.700" fill="none" stroke="#dedede" stroke-width="0.7392000000000001" stroke-linecap="round" stroke-linejoin="round" opacity=".7"/></g>
<g id="rhalf"><use href="#rquad"/><use href="#rquad" transform="translate(1366,0) scale(-1,1)"/></g>
</defs>
<rect x="601" y="182" width="164" height="415.500" fill="#101010"/>
<path d="M601 182H765L749 198H617Z" fill="url(#rfrT)"/>
<path d="M601 182H765L749 198H617Z" fill="url(#rfrT)" transform="translate(0,779.500) scale(1,-1)"/>
<path d="M601 182L621 198V581.500L601 597.500Z" fill="url(#rfrL)"/>
<path d="M601 182L621 198V581.500L601 597.500Z" fill="url(#rfrL)" transform="translate(1366,0) scale(-1,1)"/>
<rect x="621" y="198" width="124" height="383.500" fill="#242424"/>
<g filter="url(#rbl)"><use href="#rhalf"/><use href="#rhalf" transform="translate(0,779.500) scale(1,-1)"/></g>
<rect x="601" y="596.500" width="164" height="1.200" fill="#e8e870"/><!-- yellow bottom line -->
</svg>
<!-- v scrollbar -->
<div class="a" style="left:1071px;top:95px;width:18px;height:589px;background:#f0f0f0;border-left:1px solid #fdfdfd;border-right:2px solid #fdfdfd"></div>
<div class="a" style="left:1072px;top:112px;width:15px;height:556px;background:#cdcdcd"></div>
<svg class="a" style="left:1071px;top:97px" width="17" height="14"><path d="M4.500 9.500L8.500 5.500 12.500 9.500" stroke="#555" stroke-width="1.800" fill="none"/></svg>
<svg class="a" style="left:1071px;top:669px" width="17" height="14"><path d="M4.500 4.500L8.500 8.500 12.500 4.500" stroke="#555" stroke-width="1.800" fill="none"/></svg>
<!-- h scrollbar -->
<div class="a" style="left:277px;top:684px;width:21px;height:18px;background:#f4f4f4;border:1px solid;border-color:#fff #707070 #707070 #fff"></div>
<svg class="a" style="left:277px;top:684px" width="20" height="18"><path d="M10 5l5 4.500-5 4.500z" fill="#000"/><path d="M7 6v2M7 10v2" stroke="#000" stroke-width="1.500"/></svg>
<div class="a" style="left:315px;top:686px;width:740px;height:15px;background:#cdcdcd"></div>
<svg class="a" style="left:298px;top:685px" width="18" height="17"><path d="M10.500 4.500L6.500 8.500 10.500 12.500" stroke="#555" stroke-width="1.800" fill="none"/></svg>
<svg class="a" style="left:1054px;top:685px" width="18" height="17"><path d="M7 4.500L11 8.500 7 12.500" stroke="#555" stroke-width="1.800" fill="none"/></svg>
<!-- palette -->
<div class="a" style="left:277px;top:706px;width:814px;height:41px;border:1px solid;border-color:#a0a0a0 #fff #fff #a0a0a0"></div>
<div class="a" style="left:298px;top:723px;width:25px;height:21px;background:#000"></div>
<div class="a" style="left:283px;top:711px;width:26px;height:20px;background:#fff;border:1px solid #000;box-shadow:1px 1px 0 #999"></div>
<svg class="a" style="left:310px;top:711px" width="15" height="11"><rect x="1.500" y="1.500" width="8" height="5" rx="2.500" fill="none" stroke="#000" stroke-width="1.100"/><rect x="4.500" y="4.500" width="8" height="5" rx="2.500" fill="#f0f0f0" stroke="#000" stroke-width="1.100"/></svg>
<div class="sw" style="left:333px;background:#fff"></div>
<div class="sw" style="left:368px;background:#000"></div>
<div class="sw" style="left:403px;background:#00ffff"></div>
<div class="sw" style="left:438px;background:#2f3fdc"></div>
<div class="sw" style="left:473px;background:#58b850"></div>
<div class="sw" style="left:508px;background:#dc1020"></div>
<div class="sw" style="left:543px;background:#a030e0"></div>
<div class="sw" style="left:578px;background:#ffff80"></div>
<div class="sw" style="left:613px;background:#a89a34"></div>
<div class="sw" style="left:648px;background:#fcc814"></div>
<div class="sw" style="left:683px;background:#060606"></div>
<div class="sw" style="left:718px;background:#060606"></div>
<div class="sw" style="left:753px;background:#060606"></div>
<div class="sw" style="left:788px;background:#060606"></div>
<div class="sw" style="left:823px;background:#060606"></div>
<div class="sw" style="left:858px;background:#060606"></div>
<div class="sw" style="left:893px;background:#060606"></div>
<div class="sw" style="left:928px;background:#060606"></div>
<div class="sw" style="left:963px;background:#060606"></div>
<div class="sw" style="left:998px;background:#060606"></div>
<div class="sw" style="left:1033px;background:#060606"></div>
<svg class="a" style="left:1071px;top:708px" width="17" height="38"><path d="M4.500 10.500L8.500 6.500 12.500 10.500" stroke="#555" stroke-width="1.800" fill="none"/><path d="M4.500 28L8.500 32 12.500 28" stroke="#555" stroke-width="1.800" fill="none"/></svg>
<!-- RIGHT PANEL -->
<div class="a" style="left:1093px;top:43px;width:273px;height:704px;background:#f0f0f0;border-left:1px solid #8e8e8e"></div>
<div class="a" style="left:1094px;top:43px;width:2px;height:678px;background:#fdfdfd"></div>
<div class="bh" style="top:45px"><b>Vectors</b><i class="bbtn"></i></div>
<div class="bh" style="top:76px"><b>Bitmaps</b><i class="bbtn"></i></div>
<div class="bh" style="top:107px"><b>Reliefs</b><i class="bbtn"></i></div>
<div class="a" style="left:1094px;top:721px;width:272px;height:26px;overflow:hidden">
<svg width="272" height="26" class="a" style="left:0;top:0"><rect width="272" height="26" fill="#d4d4d4"/><rect width="272" height="26" filter="url(#nz)"/></svg>
</div>
<div class="a" style="left:1094px;top:720px;width:272px;height:1px;background:#b4b4b4"></div>
<div class="a" style="left:1090px;top:747px;width:276px;height:1px;background:#b0b0b0"></div>
<svg class="a" style="left:1094px;top:720px" width="110" height="28" viewBox="0 0 110 28">
<path d="M0 0H50V18C50 24 48.500 26.500 43.500 26.500H3C1 26.500 0 26.500 0 26.500Z" fill="#f0f0f0" stroke="none"/>
<path d="M50 1V18C50 24 48.500 26.500 43.500 26.500H3" fill="none" stroke="#b4b4b4" stroke-width="1"/>
<path d="M52 24V5C52 3 53 1.500 55.500 1.500H94C96.500 1.500 97.500 3 97.500 5V20C97.500 24 96 26.500 92 26.500H49C51 26.500 52 25 52 23Z" fill="#f4f4f4" stroke="#b4b4b4" stroke-width="1"/>
</svg>
<div class="t" style="left:1103px;top:727px;font-size:12.500px;transform:scaleX(.873)">Layers</div>
<div class="t" style="left:1151px;top:728px;font-size:12.500px;transform:scaleX(.95)">Add In</div>
</body></html>
